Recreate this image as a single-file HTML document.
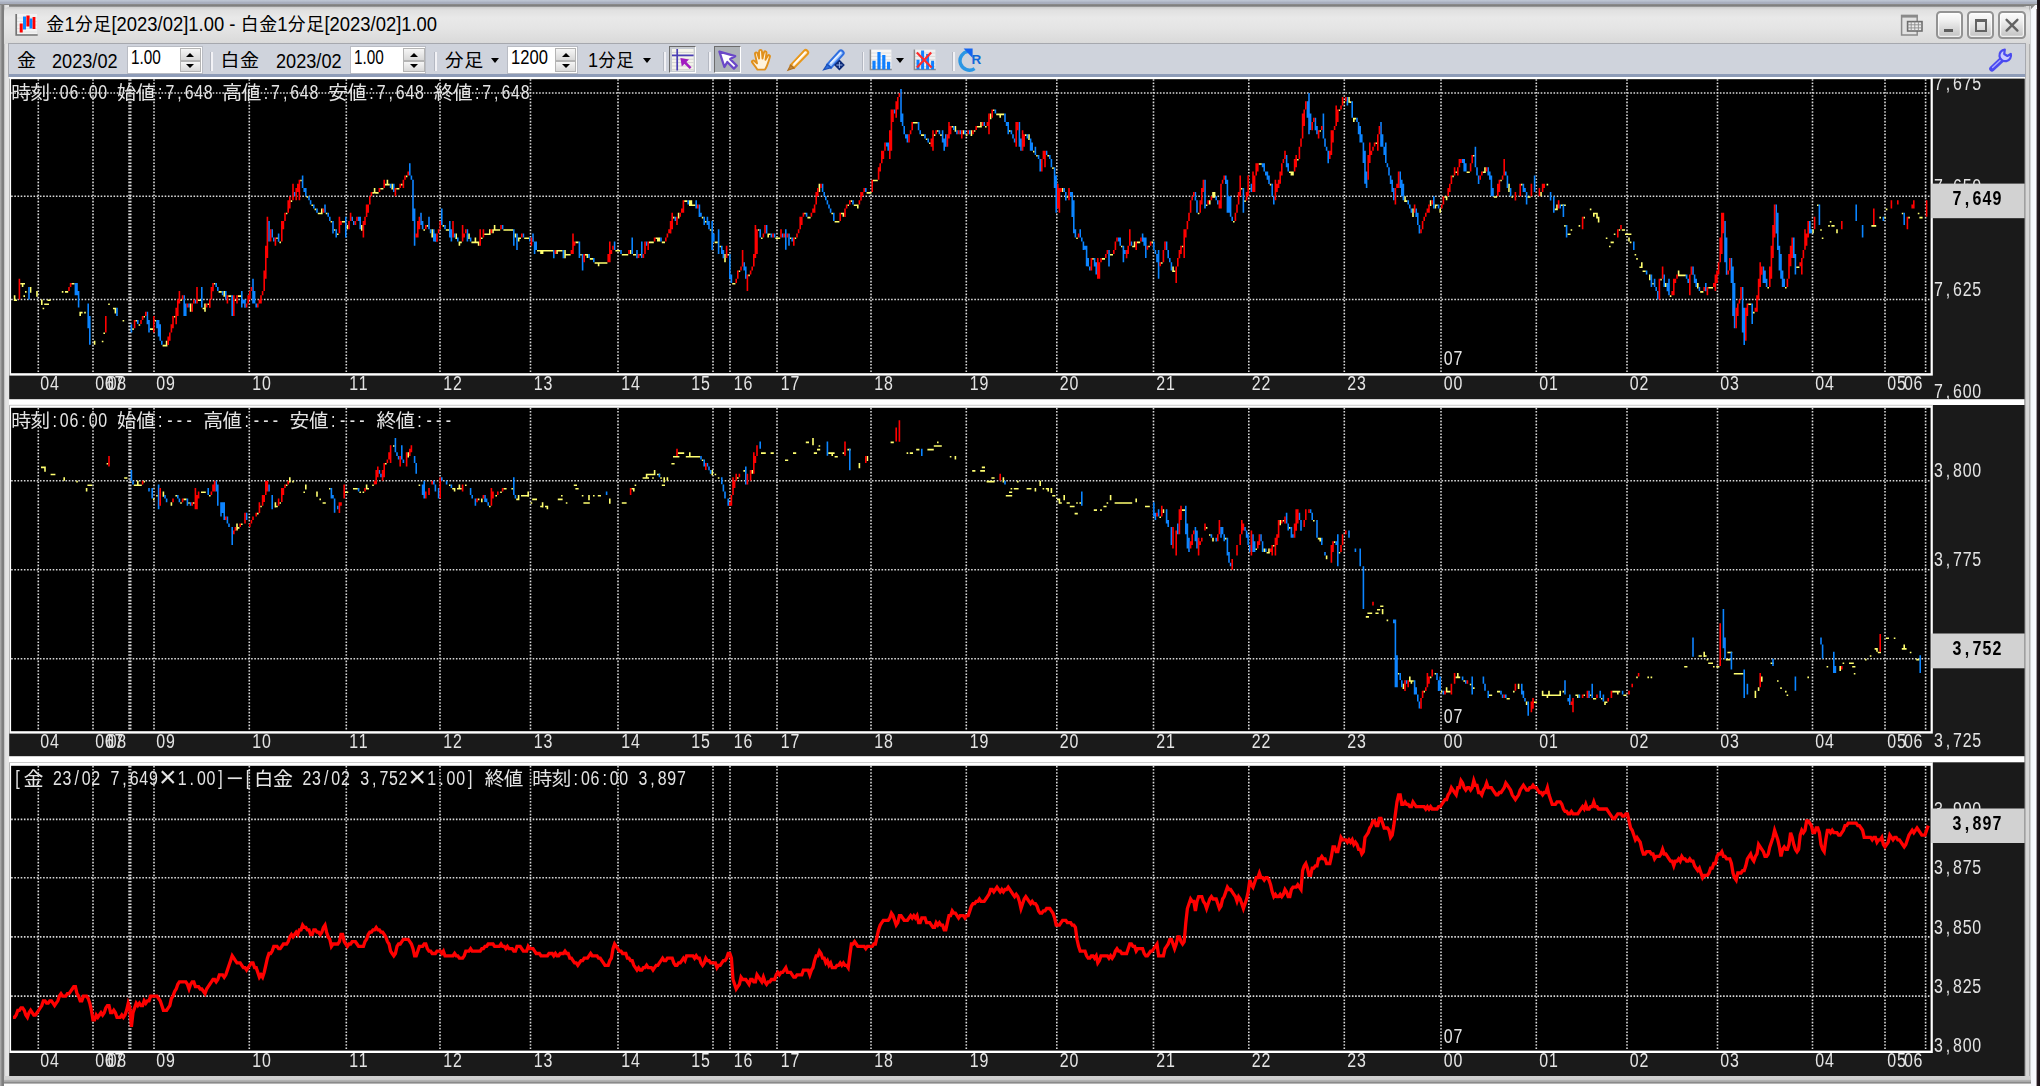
<!DOCTYPE html>
<html lang="ja"><head><meta charset="utf-8"><title>金1分足[2023/02]1.00 - 白金1分足[2023/02]1.00</title>
<style>
html,body{margin:0;padding:0}
body{width:2040px;height:1086px;overflow:hidden;position:relative;background:#fff;font-family:"Liberation Sans","IPAGothic","Noto Sans CJK JP",sans-serif}
div,span{position:absolute;box-sizing:border-box}
.ui{font-family:"Liberation Sans","IPAGothic","Noto Sans CJK JP",sans-serif;color:#000;white-space:nowrap;font-size:19.5px;line-height:24px;transform-origin:0 0}
#bgtop{left:0;top:0;width:2040px;height:8px;background:linear-gradient(#bdc5d3 0,#bbc3d1 1.2px,#aab0c0 1.9px,#a8aebd 3.6px,#8a8a8a 4.5px,#787878 6.2px,#bdbdbd 6.9px,#d4d4d4 8px)}
#frameL{left:0;top:4.5px;width:9.4px;height:1082px;background:linear-gradient(90deg,#ababab 0,#a0a0a0 1.2px,#7e7e7e 1.8px,#7e7e7e 3.8px,#c4c4c4 4.4px,#e2e2e2 5.6px,#e6e6e6 9.4px)}
#frameR{left:2024.4px;top:6px;width:15.6px;height:1080px;background:linear-gradient(90deg,#a4a4a4 0,#b4b4b4 1.6px,#d6d6d6 2.4px,#d6d6d6 4.6px,#b0b0b0 5.2px,#b0b0b0 6.2px,#f4f4fa 6.8px,#fafaff 12.2px,#2a1c22 12.9px,#181016 15.6px)}
#cornerR{left:2036.7px;top:0;width:3.3px;height:8px;background:linear-gradient(90deg,#2a1c22 0,#181016 .8px)}
#cornerW{left:2031px;top:5px;width:5.9px;height:4px;background:linear-gradient(135deg,#8a8a8a 0,#8a8a8a 35%,#f6f6fa 50%)}
#frameB{left:4px;top:1076px;width:2027px;height:10px;background:linear-gradient(#d0d0d0 0,#cfcfcf 3.4px,#b4b4b4 4.2px,#a8a8a8 5.6px,#8a8a8a 6.4px,#8a8a8a 7.2px,#fdfdfd 8px)}
#title{left:4.4px;top:7px;width:2026px;height:36.6px;border-radius:5px 5px 0 0;background:linear-gradient(#cecece 0,#e0e0e0 3px,#e9e9e9 11px,#e4e4e4 22px,#d9d9d9 36.6px)}
#tbar{left:7.8px;top:43px;width:2018.4px;height:34px;background:#cfd3dc;border:1.4px solid #a6a8ae;border-bottom:none}
#tbarline{left:9.2px;top:74.4px;width:2015.4px;height:2.4px;background:#8e9cb8}
#tbarwhite{left:9.2px;top:76.8px;width:2015.4px;height:2px;background:#fdfdfd}
.spin{background:#fff;border:1px solid #b9bcc4;top:46.4px;height:27.4px}
.spbtn{width:21.4px;border:1px solid #b4b4b4;background:linear-gradient(#f6f6f6,#d8d8d8)}
.spbtn.u{top:0.6px;height:12.6px}
.spbtn.d{top:13.8px;height:10.6px}
.spbtn i{position:absolute;left:5.6px;width:0;height:0;border-left:4.2px solid transparent;border-right:4.2px solid transparent}
.spbtn.u i{top:3.8px;border-bottom:4.6px solid #000}
.spbtn.d i{top:1.6px;border-top:4.6px solid #000}
.sep{top:52.4px;width:2.2px;height:19px;background:linear-gradient(90deg,#b4b8c2 0,#b4b8c2 .6px,#f2f2f6 .8px)}
.dd{width:0;height:0;border-left:4.4px solid transparent;border-right:4.4px solid transparent;border-top:5.2px solid #000;top:57.6px}
.wbtn{top:11.2px;height:27.8px;border:2px solid #939393;border-radius:4.5px;background:linear-gradient(#fbfbfb 0,#f0f0f0 30%,#d2d2d2 75%,#c2c2c2 100%);box-shadow:inset 0 0 0 1.2px rgba(255,255,255,.75)}
.pressed{top:45.8px;height:27.6px;border-top:1.8px solid #6c6c6c;border-left:1.8px solid #6c6c6c;border-right:1.8px solid #fff;border-bottom:1.8px solid #fff}
</style></head>
<body>
<div id="bgtop"></div>
<div id="frameL"></div>
<div id="frameR"></div>
<div id="cornerR"></div><div id="cornerW"></div>
<div id="frameB"></div>
<div id="title"></div>
<!-- title icon -->
<svg style="position:absolute;left:15px;top:13px" width="24" height="24" viewBox="0 0 24 24">
<rect x="1" y="1" width="21" height="20" fill="#f3f3f3"/>
<path d="M2 5h20M2 8.5h20M2 12h20M2 15.5h20M2 19h20" stroke="#dedede" stroke-width="0.8"/>
<path d="M1.2 1v21h21.5" stroke="#747474" stroke-width="1.7" fill="none"/>
<path d="M6.2 10.5v9" stroke="#ff0000" stroke-width="3"/>
<path d="M9.5 3.5v13" stroke="#0a84ff" stroke-width="3"/>
<path d="M13 2.5v11" stroke="#ff0000" stroke-width="3.2"/>
<path d="M16 5.5v10" stroke="#0a84ff" stroke-width="3"/>
<path d="M19 4v12" stroke="#ff0000" stroke-width="2.8"/>
</svg>
<span class="ui" id="ttext" style="left:46.4px;top:11.8px;font-size:19.6px;transform:scaleX(.94)">金1分足[2023/02]1.00 - 白金1分足[2023/02]1.00</span>
<!-- window buttons -->
<svg style="position:absolute;left:1899px;top:13px" width="26" height="25" viewBox="0 0 26 25">
<rect x="2.6" y="2.4" width="15.6" height="19.6" fill="#e2e2e2" stroke="#8a8a8a" stroke-width="1.5"/>
<rect x="2.6" y="2.2" width="15.6" height="2.4" fill="#8a8a8a"/>
<rect x="8.6" y="8.6" width="14.4" height="9.4" fill="#ececec" stroke="#6e6e6e" stroke-width="1.6"/>
<path d="M8.6 11.8h14.4M8.6 14.9h14.4M12.2 8.6v9.4M15.8 8.6v9.4M19.4 8.6v9.4" stroke="#8c8c8c" stroke-width="0.9"/>
</svg>
<div class="wbtn" style="left:1935.8px;width:27.6px"><div style="left:6.2px;top:15.4px;width:9.4px;height:3px;background:#5e5e5e"></div></div>
<div class="wbtn" style="left:1967px;width:27px"><div style="left:5.6px;top:5.8px;width:12.6px;height:12.6px;border:2px solid #626262;border-top-width:3.6px"></div></div>
<div class="wbtn" style="left:1998px;width:28px"><svg style="position:absolute;left:0;top:0" width="25" height="25" viewBox="0 0 25 25"><path d="M6.600 6.800l10.800 10.800M17.400 6.800l-10.800 10.800" stroke="#626262" stroke-width="2.400" stroke-linecap="round"/></svg></div>
<!-- toolbar -->
<div id="tbar"></div><div id="tbarline"></div><div id="tbarwhite"></div>
<span class="ui" id="l1" style="left:16.8px;top:48.4px">金</span>
<span class="ui" id="l2" style="left:52.4px;top:49.2px;transform:scaleX(.93)">2023/02</span>
<div class="spin" style="left:127.0px;width:76.0px"><span class="ui" style="left:2.6px;top:-2.6px;transform:scaleX(0.786)">1.00</span><div class="spbtn u" style="left:51.6px"><i></i></div><div class="spbtn d" style="left:51.6px"><i></i></div></div>
<div class="sep" style="left:210.4px"></div>
<span class="ui" id="l3" style="left:220.2px;top:48.4px">白金</span>
<span class="ui" id="l4" style="left:275.8px;top:49.2px;transform:scaleX(.93)">2023/02</span>
<div class="spin" style="left:350.4px;width:76.0px"><span class="ui" style="left:2.8px;top:-2.6px;transform:scaleX(0.786)">1.00</span><div class="spbtn u" style="left:51.8px"><i></i></div><div class="spbtn d" style="left:51.8px"><i></i></div></div>
<div class="sep" style="left:434.4px"></div>
<span class="ui" id="l5" style="left:444.4px;top:48.4px">分足</span>
<div class="dd" style="left:491.4px"></div>
<div class="spin" style="left:507.0px;width:71.0px"><span class="ui" style="left:2.6px;top:-2.6px;transform:scaleX(0.850)">1200</span><div class="spbtn u" style="left:47.0px"><i></i></div><div class="spbtn d" style="left:47.0px"><i></i></div></div>
<span class="ui" id="l6" style="left:588px;top:48.4px;transform:scaleX(.925)">1分足</span>
<div class="dd" style="left:643px"></div>
<div class="sep" style="left:663.4px"></div>
<div class="pressed" style="left:668.6px;width:27.8px;background:#c6cad0"></div>
<svg style="position:absolute;left:671px;top:48px" width="24" height="24" viewBox="0 0 24 24">
<rect x="1" y="1" width="21.6" height="21.6" fill="#f4f4ec"/>
<path d="M1 4.4h21.6M1 7.8h21.6M1 11.2h21.6M1 14.6h21.6M1 18h21.6M1 21.4h21.6" stroke="#d4d4d0" stroke-width="1"/>
<path d="M6.2 1v21.6M1 7.4h21.6" stroke="#4a3fb4" stroke-width="1.7"/>
<path d="M19.6 20.2L11.4 12" stroke="#a21cc0" stroke-width="2.6"/>
<path d="M9.4 10l8.6 1.4-7.2 7.2z" fill="#a21cc0"/>
</svg>
<div class="sep" style="left:708.4px"></div>
<div class="pressed" style="left:713.8px;width:27.6px;background:#aeb3b8"></div>
<svg style="position:absolute;left:716px;top:48px" width="24" height="24" viewBox="0 0 24 24">
<path d="M3.4 3.6l5 15.4 2.9-5 6.6 6.6 2.9-2.9-6.6-6.6 5-2.9z" fill="#fff" stroke="#6a48c8" stroke-width="2.3" stroke-linejoin="round"/>
</svg>
<!-- hand -->
<svg style="position:absolute;left:750px;top:47px" width="25" height="25" viewBox="0 0 25 25">
<path d="M7.4 22.6c-1.4-2.6-3.6-5-5.2-7.2-.9-1.5.8-2.6 2.2-1.4l2.6 2.4c-.6-3.4-1.6-6.8-2-9.600-.2-1.600 2-2 2.500-.4l1.600 5.200c0-2.600-.2-5.400.1-7.600.3-1.600 2.400-1.500 2.700.1l.6 7.400c.5-2.200.9-4.600 1.600-6.400.6-1.400 2.500-.9 2.400.7l-1 7c.8-1.400 1.500-3 2.400-4.200.9-1.100 2.400-.3 2 1.100-.9 3.400-1.900 6.400-3 9.200-.6 1.500-1.200 2.600-1.900 3.700z" fill="#fff3dc" stroke="#e0901c" stroke-width="1.9" stroke-linejoin="round"/>
</svg>
<!-- pencil -->
<svg style="position:absolute;left:786px;top:47px" width="25" height="25" viewBox="0 0 25 25">
<path d="M4.600 18.200L18.400 3.400c1.600-1.600 5 1.600 3.400 3.400L8 21z" fill="#ffe6c0" stroke="#e8981c" stroke-width="2"/>
<path d="M4.600 18.200L2 23.200l6-2.200z" fill="#c88a3a" stroke="#b07020" stroke-width="1.2"/>
<path d="M7.600 17.600L19.400 5.200" stroke="#fff" stroke-width="1.400"/>
</svg>
<!-- marker -->
<svg style="position:absolute;left:822px;top:47px" width="26" height="25" viewBox="0 0 26 25">
<path d="M5.200 17.400L17.600 3.800c1.800-1.800 5.400 1.600 3.600 3.600L9 20.800z" fill="#9cc4ff" stroke="#2f6fe0" stroke-width="2"/>
<path d="M5.200 17.400L1.600 22.800l7.400-2z" fill="#2f6fe0" stroke="#1c50b8" stroke-width="1.200"/>
<path d="M8.400 16.600L19 5.400" stroke="#e6f0ff" stroke-width="1.600"/>
<path d="M17.400 12.600l5.400 5.400-5.400 5.400-5.400-5.400z" fill="#0c2a78"/>
<path d="M17.400 15v6M14.400 18h6" stroke="#9cb4e8" stroke-width="1"/>
</svg>
<div class="sep" style="left:861.6px"></div>
<!-- bar chart -->
<svg style="position:absolute;left:869px;top:48px" width="24" height="24" viewBox="0 0 24 24">
<rect x="1.400" y="1.600" width="21" height="20" fill="#f6f6f6"/>
<path d="M1.400 5h21M1.400 8.400h21M1.400 11.800h21M1.400 15.200h21M1.400 18.600h21" stroke="#dcdcdc" stroke-width=".9"/>
<path d="M1.400 1.600v20h21.400" stroke="#8a8a8a" stroke-width="1.500" fill="none"/>
<path d="M5 21.400v-8.600M10 21.400V4M14.800 21.400V7M19.600 21.400v-7.600" stroke="#0f80ff" stroke-width="3.200"/>
</svg>
<div class="dd" style="left:896px"></div>
<svg style="position:absolute;left:913px;top:48px" width="24" height="24" viewBox="0 0 24 24">
<rect x="1.400" y="1.600" width="21" height="20" fill="#f0f0f0"/>
<path d="M1.400 5h21M1.400 8.400h21M1.400 11.800h21M1.400 15.200h21M1.400 18.600h21" stroke="#d6d6d6" stroke-width=".9"/>
<path d="M1.400 1.600v20h21.400" stroke="#8a8a8a" stroke-width="1.500" fill="none"/>
<path d="M5 21.400v-9.600M9.600 21.400V2.400M14.600 21.400V6M19.600 21.400v-8.600" stroke="#0f80ff" stroke-width="3"/>
<path d="M3.800 4.400l14.800 15M18.200 4.400L4 19.400" stroke="#ff2a2a" stroke-width="2.200"/>
</svg>
<div class="sep" style="left:952.4px"></div>
<!-- refresh -->
<svg style="position:absolute;left:958px;top:46px" width="26" height="27" viewBox="0 0 26 27">
<path d="M16.600 22.600A9.400 9.400 0 1 1 10.400 5.400" fill="none" stroke="#2a96e4" stroke-width="3.400"/>
<path d="M5.600 2.400h9v9.600z" fill="#1464f0"/>
<text x="13.600" y="18.400" font-family="Liberation Sans,sans-serif" font-weight="bold" font-size="13.500" fill="#1268d8">R</text>
</svg>
<!-- wrench -->
<svg style="position:absolute;left:1988px;top:47px" width="27" height="26" viewBox="0 0 27 26">
<path d="M4 21.800L14 12.400" stroke="#4a4af0" stroke-width="5.600" stroke-linecap="round"/>
<path d="M4.600 20.600L12.400 13.200" stroke="#a8a8ff" stroke-width="1.400" stroke-linecap="round"/>
<path d="M22.800 6.800a5.800 5.800 0 1 1-6-4.200l-.6 4.400 3.200 2z" fill="#c8c8ff" stroke="#4a4af0" stroke-width="2.200" stroke-linejoin="round"/>
</svg>
<svg width="2040" height="1086" viewBox="0 0 2040 1086" style="position:absolute;left:0;top:0">
<defs><filter id="bl" filterUnits="userSpaceOnUse" x="0" y="0" width="2040" height="1086"><feGaussianBlur stdDeviation="0.45"/></filter><filter id="tb" filterUnits="userSpaceOnUse" x="0" y="0" width="2040" height="1086"><feGaussianBlur stdDeviation="0.4"/></filter></defs>
<style>.m{font-family:"Liberation Sans",sans-serif}.j{font-family:"Liberation Sans","IPAGothic","Noto Sans CJK JP",sans-serif}</style>
<g>
<rect x="9.2" y="78.6" width="2015.4" height="320.6" fill="#1a1a1a"/>
<rect x="9.4" y="77.0" width="1923.4" height="298.6" fill="#fff"/>
<rect x="11.1" y="79.2" width="1919.5" height="294.0" fill="#000"/>
<path d="M38.3 79.2 V373.2 M93.0 79.2 V373.2 M129.1 79.2 V373.2 M130.7 79.2 V373.2 M154.0 79.2 V373.2 M249.3 79.2 V373.2 M346.3 79.2 V373.2 M440.0 79.2 V373.2 M530.5 79.2 V373.2 M618.0 79.2 V373.2 M713.0 79.2 V373.2 M730.0 79.2 V373.2 M777.0 79.2 V373.2 M871.0 79.2 V373.2 M966.3 79.2 V373.2 M1056.8 79.2 V373.2 M1153.5 79.2 V373.2 M1248.8 79.2 V373.2 M1344.3 79.2 V373.2 M1441.0 79.2 V373.2 M1536.3 79.2 V373.2 M1627.0 79.2 V373.2 M1717.5 79.2 V373.2 M1812.5 79.2 V373.2 M1885.0 79.2 V373.2 M1925.6 79.2 V373.2" stroke="#d8d8d8" stroke-width="1.6" stroke-dasharray="1.6 1.6" fill="none"/>
<path d="M11.1 93.0 H1930.6 M11.1 196.2 H1930.6 M11.1 299.5 H1930.6" stroke="#d8d8d8" stroke-width="1.6" stroke-dasharray="1.6 1.6" fill="none"/>
<g filter="url(#tb)">
<text class="m" xml:space="preserve" transform="translate(40.0 389.8) scale(0.760 1)" x="0.5 13.1" fill="#e4e4e4" font-size="21">04</text>
<text class="m" xml:space="preserve" transform="translate(95.0 389.8) scale(0.760 1)" x="0.5 13.1" fill="#e4e4e4" font-size="21">06</text>
<text class="m" xml:space="preserve" transform="translate(104.6 389.8) scale(0.760 1)" x="0.5 13.1" fill="#e4e4e4" font-size="21">07</text>
<text class="m" xml:space="preserve" transform="translate(107.4 389.8) scale(0.760 1)" x="0.5 13.1" fill="#e4e4e4" font-size="21">08</text>
<text class="m" xml:space="preserve" transform="translate(156.0 389.8) scale(0.760 1)" x="0.5 13.1" fill="#e4e4e4" font-size="21">09</text>
<text class="m" xml:space="preserve" transform="translate(252.0 389.8) scale(0.760 1)" x="0.5 13.1" fill="#e4e4e4" font-size="21">10</text>
<text class="m" xml:space="preserve" transform="translate(348.8 389.8) scale(0.760 1)" x="0.5 13.1" fill="#e4e4e4" font-size="21">11</text>
<text class="m" xml:space="preserve" transform="translate(443.0 389.8) scale(0.760 1)" x="0.5 13.1" fill="#e4e4e4" font-size="21">12</text>
<text class="m" xml:space="preserve" transform="translate(533.5 389.8) scale(0.760 1)" x="0.5 13.1" fill="#e4e4e4" font-size="21">13</text>
<text class="m" xml:space="preserve" transform="translate(621.0 389.8) scale(0.760 1)" x="0.5 13.1" fill="#e4e4e4" font-size="21">14</text>
<text class="m" xml:space="preserve" transform="translate(691.0 389.8) scale(0.760 1)" x="0.5 13.1" fill="#e4e4e4" font-size="21">15</text>
<text class="m" xml:space="preserve" transform="translate(733.5 389.8) scale(0.760 1)" x="0.5 13.1" fill="#e4e4e4" font-size="21">16</text>
<text class="m" xml:space="preserve" transform="translate(780.5 389.8) scale(0.760 1)" x="0.5 13.1" fill="#e4e4e4" font-size="21">17</text>
<text class="m" xml:space="preserve" transform="translate(874.0 389.8) scale(0.760 1)" x="0.5 13.1" fill="#e4e4e4" font-size="21">18</text>
<text class="m" xml:space="preserve" transform="translate(969.5 389.8) scale(0.760 1)" x="0.5 13.1" fill="#e4e4e4" font-size="21">19</text>
<text class="m" xml:space="preserve" transform="translate(1059.5 389.8) scale(0.760 1)" x="0.5 13.1" fill="#e4e4e4" font-size="21">20</text>
<text class="m" xml:space="preserve" transform="translate(1156.0 389.8) scale(0.760 1)" x="0.5 13.1" fill="#e4e4e4" font-size="21">21</text>
<text class="m" xml:space="preserve" transform="translate(1251.5 389.8) scale(0.760 1)" x="0.5 13.1" fill="#e4e4e4" font-size="21">22</text>
<text class="m" xml:space="preserve" transform="translate(1347.0 389.8) scale(0.760 1)" x="0.5 13.1" fill="#e4e4e4" font-size="21">23</text>
<text class="m" xml:space="preserve" transform="translate(1443.5 389.8) scale(0.760 1)" x="0.5 13.1" fill="#e4e4e4" font-size="21">00</text>
<text class="m" xml:space="preserve" transform="translate(1539.0 389.8) scale(0.760 1)" x="0.5 13.1" fill="#e4e4e4" font-size="21">01</text>
<text class="m" xml:space="preserve" transform="translate(1629.5 389.8) scale(0.760 1)" x="0.5 13.1" fill="#e4e4e4" font-size="21">02</text>
<text class="m" xml:space="preserve" transform="translate(1720.0 389.8) scale(0.760 1)" x="0.5 13.1" fill="#e4e4e4" font-size="21">03</text>
<text class="m" xml:space="preserve" transform="translate(1815.0 389.8) scale(0.760 1)" x="0.5 13.1" fill="#e4e4e4" font-size="21">04</text>
<text class="m" xml:space="preserve" transform="translate(1887.0 389.8) scale(0.760 1)" x="0.5 13.1" fill="#e4e4e4" font-size="21">05</text>
<text class="m" xml:space="preserve" transform="translate(1903.6 389.8) scale(0.760 1)" x="0.5 13.1" fill="#e4e4e4" font-size="21">06</text>
<text class="m" xml:space="preserve" transform="translate(1443.5 365.2) scale(0.760 1)" x="0.5 13.1" fill="#e4e4e4" font-size="21">07</text>
<clipPath id="c0"><rect x="1930" y="78.6" width="100" height="320.6"/></clipPath>
<g clip-path="url(#c0)">
<text class="m" xml:space="preserve" transform="translate(1933.6 89.6) scale(0.760 1)" x="0.5 16.0 25.7 38.4 51.0" fill="#e4e4e4" font-size="21">7,675</text>
<text class="m" xml:space="preserve" transform="translate(1933.6 192.8) scale(0.760 1)" x="0.5 16.0 25.7 38.4 51.0" fill="#e4e4e4" font-size="21">7,650</text>
<text class="m" xml:space="preserve" transform="translate(1933.6 296.0) scale(0.760 1)" x="0.5 16.0 25.7 38.4 51.0" fill="#e4e4e4" font-size="21">7,625</text>
<text class="m" xml:space="preserve" transform="translate(1933.6 397.6) scale(0.760 1)" x="0.5 16.0 25.7 38.4 51.0" fill="#e4e4e4" font-size="21">7,600</text>
</g>
<text class="j" x="10.9 30.1" y="99.5" fill="#e4e4e4" font-size="20.4">時刻</text><text class="m" xml:space="preserve" transform="translate(49.9 98.5) scale(0.760 1)" x="3.4 13.1 25.7 41.3 51.0 63.6 79.2" fill="#e4e4e4" font-size="21">:06:00 </text><text class="j" x="116.5 135.7" y="99.5" fill="#e4e4e4" font-size="20.4">始値</text><text class="m" xml:space="preserve" transform="translate(155.5 98.5) scale(0.760 1)" x="3.4 13.1 28.7 38.4 51.0 63.6 79.2" fill="#e4e4e4" font-size="21">:7,648 </text><text class="j" x="222.1 241.3" y="99.5" fill="#e4e4e4" font-size="20.4">高値</text><text class="m" xml:space="preserve" transform="translate(261.1 98.5) scale(0.760 1)" x="3.4 13.1 28.7 38.4 51.0 63.6 79.2" fill="#e4e4e4" font-size="21">:7,648 </text><text class="j" x="327.7 346.9" y="99.5" fill="#e4e4e4" font-size="20.4">安値</text><text class="m" xml:space="preserve" transform="translate(366.7 98.5) scale(0.760 1)" x="3.4 13.1 28.7 38.4 51.0 63.6 79.2" fill="#e4e4e4" font-size="21">:7,648 </text><text class="j" x="433.3 452.5" y="99.5" fill="#e4e4e4" font-size="20.4">終値</text><text class="m" xml:space="preserve" transform="translate(472.3 98.5) scale(0.760 1)" x="3.4 13.1 28.7 38.4 51.0 63.6" fill="#e4e4e4" font-size="21">:7,648</text>
</g>
<g filter="url(#bl)">
<path d="M13.8 295.3 h1.6 v5.7 h-1.6 zM15.4 299.4 h1.6 v1.6 h-1.6 zM20.2 282.9 h4.8 v1.6 h-4.8 zM21.8 282.9 h1.6 v4.1 h-1.6 zM23.4 295.3 h1.6 v1.6 h-1.6 zM25.0 291.1 h1.6 v1.6 h-1.6 zM29.8 287.0 h1.6 v5.7 h-1.6 zM36.2 291.1 h1.6 v5.7 h-1.6 zM41.0 299.4 h1.6 v5.7 h-1.6 zM42.6 307.7 h1.6 v1.6 h-1.6 zM44.2 303.5 h4.8 v1.6 h-4.8 zM47.4 299.4 h3.2 v1.6 h-3.2 zM61.8 291.1 h1.6 v1.6 h-1.6 zM65.0 291.1 h1.6 v1.6 h-1.6 zM66.6 291.1 h1.6 v1.6 h-1.6 zM71.4 282.9 h1.6 v1.6 h-1.6 zM73.0 282.9 h1.6 v1.6 h-1.6 zM79.4 311.8 h1.6 v4.1 h-1.6 zM81.0 311.8 h1.6 v1.6 h-1.6 zM84.2 311.8 h1.6 v1.6 h-1.6 zM93.8 340.7 h1.6 v4.1 h-1.6 zM101.8 340.7 h1.6 v1.6 h-1.6 zM103.4 332.4 h1.6 v1.6 h-1.6 zM108.2 303.5 h1.6 v1.6 h-1.6 zM113.0 307.7 h1.6 v1.6 h-1.6 zM114.6 307.7 h1.6 v5.7 h-1.6 zM122.6 320.0 h1.6 v1.6 h-1.6 zM132.2 328.3 h1.6 v1.6 h-1.6 zM135.4 320.0 h1.6 v1.6 h-1.6 zM138.6 324.2 h1.6 v1.6 h-1.6 zM143.4 315.9 h1.6 v1.6 h-1.6 zM149.8 328.3 h1.6 v1.6 h-1.6 zM151.4 328.3 h1.6 v1.6 h-1.6 zM154.6 320.0 h1.6 v1.6 h-1.6 zM162.6 344.8 h1.6 v1.6 h-1.6 zM164.2 344.8 h1.6 v1.6 h-1.6 zM165.8 340.7 h1.6 v5.7 h-1.6 zM173.8 315.9 h1.6 v1.6 h-1.6 zM180.2 299.4 h1.6 v1.6 h-1.6 zM189.8 303.5 h1.6 v8.3 h-1.6 zM197.8 299.4 h1.6 v1.6 h-1.6 zM199.4 299.4 h1.6 v1.6 h-1.6 zM202.6 307.7 h1.6 v1.6 h-1.6 zM204.2 303.5 h1.6 v8.3 h-1.6 zM207.4 303.5 h1.6 v1.6 h-1.6 zM213.8 282.9 h1.6 v1.6 h-1.6 zM218.6 291.1 h1.6 v1.6 h-1.6 zM220.2 291.1 h1.6 v1.6 h-1.6 zM223.4 291.1 h1.6 v5.7 h-1.6 zM228.2 295.3 h1.6 v1.6 h-1.6 zM229.8 295.3 h1.6 v1.6 h-1.6 zM234.6 299.4 h1.6 v1.6 h-1.6 zM237.8 295.3 h1.6 v1.6 h-1.6 zM239.4 295.3 h1.6 v1.6 h-1.6 zM276.2 237.5 h1.6 v1.6 h-1.6 zM279.4 241.6 h1.6 v1.6 h-1.6 zM285.8 212.7 h1.6 v1.6 h-1.6 zM290.6 200.3 h1.6 v1.6 h-1.6 zM300.2 179.7 h1.6 v1.6 h-1.6 zM306.6 196.2 h1.6 v1.6 h-1.6 zM311.4 204.5 h1.6 v1.6 h-1.6 zM314.6 208.6 h1.6 v1.6 h-1.6 zM317.8 212.7 h1.6 v1.6 h-1.6 zM319.4 212.7 h1.6 v1.6 h-1.6 zM321.0 208.6 h1.6 v5.7 h-1.6 zM325.8 212.7 h1.6 v1.6 h-1.6 zM330.6 221.0 h1.6 v1.6 h-1.6 zM333.8 229.2 h1.6 v1.6 h-1.6 zM337.0 233.4 h1.6 v1.6 h-1.6 zM341.8 221.0 h1.6 v1.6 h-1.6 zM343.4 221.0 h1.6 v1.6 h-1.6 zM346.6 225.1 h1.6 v4.1 h-1.6 zM361.0 225.1 h1.6 v5.7 h-1.6 zM372.2 192.1 h1.6 v1.6 h-1.6 zM373.8 187.9 h1.6 v5.7 h-1.6 zM375.4 192.1 h1.6 v1.6 h-1.6 zM377.0 192.1 h1.6 v1.6 h-1.6 zM380.2 187.9 h1.6 v1.6 h-1.6 zM381.8 187.9 h1.6 v1.6 h-1.6 zM385.0 183.8 h1.6 v1.6 h-1.6 zM386.6 179.7 h1.6 v5.7 h-1.6 zM388.2 183.8 h1.6 v1.6 h-1.6 zM391.4 183.8 h1.6 v5.7 h-1.6 zM396.2 187.9 h1.6 v1.6 h-1.6 zM397.8 187.9 h1.6 v1.6 h-1.6 zM401.0 183.8 h1.6 v1.6 h-1.6 zM405.8 175.6 h1.6 v1.6 h-1.6 zM423.4 229.2 h1.6 v1.6 h-1.6 zM426.6 225.1 h1.6 v1.6 h-1.6 zM431.4 229.2 h1.6 v8.3 h-1.6 zM442.6 225.1 h1.6 v1.6 h-1.6 zM445.8 229.2 h1.6 v1.6 h-1.6 zM447.4 229.2 h1.6 v1.6 h-1.6 zM455.4 233.4 h1.6 v5.7 h-1.6 zM458.6 241.6 h1.6 v4.1 h-1.6 zM460.2 241.6 h1.6 v1.6 h-1.6 zM468.2 233.4 h1.6 v5.7 h-1.6 zM471.4 241.6 h1.6 v1.6 h-1.6 zM473.0 241.6 h1.6 v1.6 h-1.6 zM474.6 237.5 h1.6 v5.7 h-1.6 zM476.2 241.6 h1.6 v1.6 h-1.6 zM477.8 241.6 h1.6 v4.1 h-1.6 zM481.0 237.5 h1.6 v1.6 h-1.6 zM484.2 233.4 h1.6 v1.6 h-1.6 zM485.8 233.4 h1.6 v1.6 h-1.6 zM487.4 233.4 h1.6 v1.6 h-1.6 zM489.0 229.2 h1.6 v5.7 h-1.6 zM492.2 229.2 h1.6 v4.1 h-1.6 zM493.8 225.1 h1.6 v5.7 h-1.6 zM495.4 229.2 h1.6 v1.6 h-1.6 zM497.0 229.2 h1.6 v1.6 h-1.6 zM498.6 229.2 h1.6 v1.6 h-1.6 zM503.4 229.2 h1.6 v1.6 h-1.6 zM505.0 229.2 h1.6 v1.6 h-1.6 zM506.6 229.2 h1.6 v1.6 h-1.6 zM508.2 229.2 h1.6 v1.6 h-1.6 zM509.8 229.2 h1.6 v1.6 h-1.6 zM511.4 229.2 h1.6 v1.6 h-1.6 zM514.6 233.4 h1.6 v4.1 h-1.6 zM517.8 237.5 h1.6 v4.1 h-1.6 zM519.4 237.5 h1.6 v1.6 h-1.6 zM524.2 237.5 h1.6 v1.6 h-1.6 zM525.8 237.5 h1.6 v1.6 h-1.6 zM527.4 237.5 h1.6 v1.6 h-1.6 zM537.0 249.9 h1.6 v1.6 h-1.6 zM538.6 249.9 h1.6 v1.6 h-1.6 zM540.2 249.9 h1.6 v4.1 h-1.6 zM541.8 249.9 h1.6 v4.1 h-1.6 zM543.4 249.9 h1.6 v1.6 h-1.6 zM545.0 249.9 h1.6 v1.6 h-1.6 zM546.6 249.9 h1.6 v1.6 h-1.6 zM548.2 249.9 h1.6 v1.6 h-1.6 zM549.8 249.9 h1.6 v1.6 h-1.6 zM551.4 249.9 h1.6 v1.6 h-1.6 zM556.2 249.9 h1.6 v4.1 h-1.6 zM557.8 249.9 h1.6 v1.6 h-1.6 zM559.4 249.9 h1.6 v1.6 h-1.6 zM561.0 249.9 h1.6 v1.6 h-1.6 zM564.2 249.9 h1.6 v8.3 h-1.6 zM565.8 254.0 h1.6 v1.6 h-1.6 zM567.4 254.0 h1.6 v1.6 h-1.6 zM569.0 254.0 h1.6 v1.6 h-1.6 zM575.4 241.6 h1.6 v1.6 h-1.6 zM577.0 241.6 h1.6 v1.6 h-1.6 zM580.2 254.0 h1.6 v1.6 h-1.6 zM585.0 254.0 h1.6 v1.6 h-1.6 zM586.6 254.0 h1.6 v4.1 h-1.6 zM589.8 258.1 h1.6 v1.6 h-1.6 zM591.4 258.1 h1.6 v1.6 h-1.6 zM594.6 262.2 h1.6 v1.6 h-1.6 zM596.2 262.2 h1.6 v1.6 h-1.6 zM597.8 262.2 h1.6 v4.1 h-1.6 zM599.4 262.2 h1.6 v1.6 h-1.6 zM601.0 262.2 h1.6 v1.6 h-1.6 zM602.6 262.2 h1.6 v1.6 h-1.6 zM604.2 262.2 h1.6 v1.6 h-1.6 zM605.8 262.2 h1.6 v1.6 h-1.6 zM615.4 249.9 h1.6 v1.6 h-1.6 zM617.0 249.9 h1.6 v1.6 h-1.6 zM618.6 249.9 h1.6 v1.6 h-1.6 zM621.8 254.0 h1.6 v1.6 h-1.6 zM623.4 254.0 h1.6 v1.6 h-1.6 zM625.0 254.0 h1.6 v1.6 h-1.6 zM626.6 254.0 h1.6 v1.6 h-1.6 zM629.8 249.9 h1.6 v4.1 h-1.6 zM633.0 254.0 h1.6 v1.6 h-1.6 zM634.6 254.0 h1.6 v1.6 h-1.6 zM639.4 254.0 h1.6 v1.6 h-1.6 zM649.0 241.6 h1.6 v1.6 h-1.6 zM650.6 241.6 h1.6 v1.6 h-1.6 zM652.2 241.6 h1.6 v1.6 h-1.6 zM655.4 237.5 h1.6 v1.6 h-1.6 zM657.0 237.5 h1.6 v4.1 h-1.6 zM658.6 237.5 h1.6 v4.1 h-1.6 zM661.8 241.6 h1.6 v1.6 h-1.6 zM663.4 241.6 h1.6 v1.6 h-1.6 zM673.0 216.8 h1.6 v1.6 h-1.6 zM677.8 212.7 h1.6 v5.7 h-1.6 zM684.2 200.3 h1.6 v1.6 h-1.6 zM685.8 200.3 h1.6 v1.6 h-1.6 zM689.0 200.3 h1.6 v5.7 h-1.6 zM690.6 200.3 h1.6 v5.7 h-1.6 zM692.2 204.5 h1.6 v1.6 h-1.6 zM693.8 204.5 h1.6 v1.6 h-1.6 zM701.8 216.8 h1.6 v1.6 h-1.6 zM705.0 221.0 h1.6 v1.6 h-1.6 zM709.8 229.2 h1.6 v1.6 h-1.6 zM714.6 241.6 h1.6 v1.6 h-1.6 zM716.2 241.6 h1.6 v1.6 h-1.6 zM719.4 245.7 h1.6 v1.6 h-1.6 zM724.2 254.0 h1.6 v8.3 h-1.6 zM727.4 254.0 h1.6 v1.6 h-1.6 zM732.2 282.9 h1.6 v1.6 h-1.6 zM733.8 282.9 h1.6 v1.6 h-1.6 zM738.6 270.5 h1.6 v1.6 h-1.6 zM748.2 274.6 h1.6 v1.6 h-1.6 zM757.8 229.2 h1.6 v1.6 h-1.6 zM761.0 237.5 h1.6 v1.6 h-1.6 zM767.4 233.4 h1.6 v4.1 h-1.6 zM769.0 233.4 h1.6 v1.6 h-1.6 zM775.4 237.5 h1.6 v1.6 h-1.6 zM777.0 237.5 h1.6 v1.6 h-1.6 zM778.6 237.5 h1.6 v1.6 h-1.6 zM789.8 237.5 h1.6 v1.6 h-1.6 zM794.6 237.5 h1.6 v1.6 h-1.6 zM804.2 212.7 h1.6 v1.6 h-1.6 zM807.4 216.8 h1.6 v1.6 h-1.6 zM809.0 216.8 h1.6 v1.6 h-1.6 zM818.6 183.8 h1.6 v8.3 h-1.6 zM831.4 212.7 h1.6 v1.6 h-1.6 zM834.6 221.0 h1.6 v1.6 h-1.6 zM836.2 221.0 h1.6 v1.6 h-1.6 zM837.8 221.0 h1.6 v1.6 h-1.6 zM841.0 212.7 h1.6 v1.6 h-1.6 zM842.6 212.7 h1.6 v4.1 h-1.6 zM847.4 204.5 h1.6 v1.6 h-1.6 zM850.6 200.3 h1.6 v1.6 h-1.6 zM853.8 204.5 h1.6 v1.6 h-1.6 zM855.4 204.5 h1.6 v1.6 h-1.6 zM857.0 204.5 h1.6 v4.1 h-1.6 zM866.6 192.1 h1.6 v1.6 h-1.6 zM868.2 192.1 h1.6 v1.6 h-1.6 zM869.8 192.1 h1.6 v1.6 h-1.6 zM873.0 179.7 h1.6 v1.6 h-1.6 zM874.6 179.7 h1.6 v1.6 h-1.6 zM876.2 179.7 h1.6 v1.6 h-1.6 zM913.0 121.9 h1.6 v1.6 h-1.6 zM914.6 121.9 h1.6 v1.6 h-1.6 zM916.2 121.9 h1.6 v1.6 h-1.6 zM921.0 134.3 h1.6 v1.6 h-1.6 zM922.6 134.3 h1.6 v1.6 h-1.6 zM925.8 138.4 h1.6 v1.6 h-1.6 zM929.0 142.5 h1.6 v1.6 h-1.6 zM933.8 134.3 h1.6 v1.6 h-1.6 zM937.0 130.2 h1.6 v1.6 h-1.6 zM940.2 134.3 h1.6 v1.6 h-1.6 zM951.4 126.0 h1.6 v1.6 h-1.6 zM954.6 126.0 h1.6 v5.7 h-1.6 zM962.6 130.2 h1.6 v4.1 h-1.6 zM965.8 134.3 h1.6 v1.6 h-1.6 zM970.6 130.2 h1.6 v5.7 h-1.6 zM973.8 130.2 h1.6 v1.6 h-1.6 zM977.0 126.0 h1.6 v1.6 h-1.6 zM978.6 126.0 h1.6 v1.6 h-1.6 zM980.2 121.9 h1.6 v5.7 h-1.6 zM985.0 126.0 h1.6 v1.6 h-1.6 zM989.8 113.6 h1.6 v5.7 h-1.6 zM993.0 109.5 h1.6 v1.6 h-1.6 zM996.2 113.6 h1.6 v1.6 h-1.6 zM997.8 113.6 h1.6 v1.6 h-1.6 zM999.4 113.6 h1.6 v4.1 h-1.6 zM1001.0 113.6 h1.6 v1.6 h-1.6 zM1002.6 113.6 h1.6 v1.6 h-1.6 zM1009.0 130.2 h1.6 v1.6 h-1.6 zM1025.0 134.3 h1.6 v1.6 h-1.6 zM1028.2 134.3 h1.6 v5.7 h-1.6 zM1033.0 150.8 h1.6 v1.6 h-1.6 zM1036.2 154.9 h1.6 v1.6 h-1.6 zM1047.4 154.9 h1.6 v1.6 h-1.6 zM1052.2 167.3 h1.6 v1.6 h-1.6 zM1061.8 187.9 h1.6 v4.1 h-1.6 zM1066.6 196.2 h1.6 v1.6 h-1.6 zM1076.2 237.5 h1.6 v1.6 h-1.6 zM1092.2 258.1 h1.6 v1.6 h-1.6 zM1101.8 258.1 h1.6 v1.6 h-1.6 zM1103.4 258.1 h1.6 v1.6 h-1.6 zM1109.8 254.0 h1.6 v1.6 h-1.6 zM1111.4 254.0 h1.6 v1.6 h-1.6 zM1121.0 245.7 h1.6 v1.6 h-1.6 zM1132.2 245.7 h1.6 v1.6 h-1.6 zM1133.8 241.6 h1.6 v5.7 h-1.6 zM1137.0 241.6 h1.6 v1.6 h-1.6 zM1138.6 241.6 h1.6 v1.6 h-1.6 zM1148.2 245.7 h1.6 v1.6 h-1.6 zM1151.4 241.6 h1.6 v1.6 h-1.6 zM1161.0 262.2 h1.6 v1.6 h-1.6 zM1172.2 266.4 h1.6 v5.7 h-1.6 zM1173.8 270.5 h1.6 v1.6 h-1.6 zM1181.8 245.7 h1.6 v1.6 h-1.6 zM1197.8 212.7 h1.6 v1.6 h-1.6 zM1205.8 204.5 h1.6 v1.6 h-1.6 zM1209.0 200.3 h1.6 v4.1 h-1.6 zM1212.2 192.1 h1.6 v5.7 h-1.6 zM1213.8 192.1 h1.6 v5.7 h-1.6 zM1233.0 221.0 h1.6 v1.6 h-1.6 zM1241.0 187.9 h1.6 v1.6 h-1.6 zM1244.2 200.3 h1.6 v1.6 h-1.6 zM1249.0 187.9 h1.6 v1.6 h-1.6 zM1258.6 163.2 h1.6 v1.6 h-1.6 zM1260.2 163.2 h1.6 v1.6 h-1.6 zM1269.8 183.8 h1.6 v1.6 h-1.6 zM1289.0 171.4 h1.6 v1.6 h-1.6 zM1290.6 171.4 h1.6 v4.1 h-1.6 zM1292.2 171.4 h1.6 v4.1 h-1.6 zM1297.0 159.0 h1.6 v1.6 h-1.6 zM1319.4 130.2 h1.6 v1.6 h-1.6 zM1338.6 109.5 h1.6 v1.6 h-1.6 zM1343.4 101.3 h1.6 v1.6 h-1.6 zM1348.2 97.1 h1.6 v5.7 h-1.6 zM1349.8 101.3 h1.6 v1.6 h-1.6 zM1353.0 117.8 h1.6 v4.1 h-1.6 zM1354.6 117.8 h1.6 v1.6 h-1.6 zM1375.4 142.5 h1.6 v1.6 h-1.6 zM1404.2 196.2 h1.6 v5.7 h-1.6 zM1405.8 200.3 h1.6 v1.6 h-1.6 zM1412.2 208.6 h1.6 v8.3 h-1.6 zM1429.8 200.3 h1.6 v5.7 h-1.6 zM1434.6 204.5 h1.6 v4.1 h-1.6 zM1436.2 204.5 h1.6 v1.6 h-1.6 zM1439.4 208.6 h1.6 v4.1 h-1.6 zM1444.2 196.2 h1.6 v1.6 h-1.6 zM1445.8 196.2 h1.6 v4.1 h-1.6 zM1452.2 175.6 h1.6 v1.6 h-1.6 zM1455.4 171.4 h1.6 v1.6 h-1.6 zM1466.6 171.4 h1.6 v1.6 h-1.6 zM1468.2 171.4 h1.6 v1.6 h-1.6 zM1473.0 154.9 h1.6 v1.6 h-1.6 zM1482.6 171.4 h1.6 v1.6 h-1.6 zM1484.2 167.3 h1.6 v5.7 h-1.6 zM1493.8 196.2 h1.6 v1.6 h-1.6 zM1495.4 196.2 h1.6 v1.6 h-1.6 zM1500.2 179.7 h1.6 v1.6 h-1.6 zM1508.2 183.8 h1.6 v8.3 h-1.6 zM1511.4 196.2 h1.6 v1.6 h-1.6 zM1521.0 183.8 h1.6 v1.6 h-1.6 zM1527.4 196.2 h1.6 v1.6 h-1.6 zM1529.0 196.2 h1.6 v1.6 h-1.6 zM1540.2 192.1 h1.6 v4.1 h-1.6 zM1546.6 183.8 h1.6 v1.6 h-1.6 zM1554.6 208.6 h1.6 v1.6 h-1.6 zM1556.2 204.5 h1.6 v5.7 h-1.6 zM1561.0 204.5 h4.8 v1.6 h-4.8 zM1564.2 225.1 h1.6 v1.6 h-1.6 zM1567.4 233.4 h3.2 v1.6 h-3.2 zM1569.0 233.4 h1.6 v1.6 h-1.6 zM1570.6 229.2 h1.6 v1.6 h-1.6 zM1578.6 225.1 h1.6 v1.6 h-1.6 zM1583.4 216.8 h1.6 v1.6 h-1.6 zM1589.8 208.6 h1.6 v1.6 h-1.6 zM1593.0 212.7 h1.6 v4.1 h-1.6 zM1594.6 212.7 h1.6 v1.6 h-1.6 zM1596.2 212.7 h1.6 v5.7 h-1.6 zM1597.8 216.8 h1.6 v5.7 h-1.6 zM1605.8 237.5 h1.6 v1.6 h-1.6 zM1609.0 245.7 h1.6 v1.6 h-1.6 zM1610.6 241.6 h3.2 v1.6 h-3.2 zM1613.8 233.4 h1.6 v1.6 h-1.6 zM1618.6 229.2 h1.6 v1.6 h-1.6 zM1621.8 229.2 h3.2 v1.6 h-3.2 zM1625.0 233.4 h1.6 v1.6 h-1.6 zM1626.6 233.4 h4.8 v1.6 h-4.8 zM1628.2 237.5 h1.6 v4.1 h-1.6 zM1629.8 241.6 h1.6 v1.6 h-1.6 zM1634.6 254.0 h1.6 v1.6 h-1.6 zM1636.2 258.1 h1.6 v1.6 h-1.6 zM1639.4 266.4 h1.6 v1.6 h-1.6 zM1641.0 262.2 h1.6 v5.7 h-1.6 zM1642.6 270.5 h3.2 v1.6 h-3.2 zM1649.0 274.6 h1.6 v5.7 h-1.6 zM1652.2 282.9 h1.6 v1.6 h-1.6 zM1660.2 278.8 h1.6 v1.6 h-1.6 zM1665.0 282.9 h1.6 v4.1 h-1.6 zM1669.8 295.3 h1.6 v1.6 h-1.6 zM1677.8 270.5 h1.6 v5.7 h-1.6 zM1679.4 274.6 h1.6 v1.6 h-1.6 zM1681.0 274.6 h1.6 v1.6 h-1.6 zM1682.6 274.6 h1.6 v1.6 h-1.6 zM1684.2 274.6 h1.6 v1.6 h-1.6 zM1697.0 282.9 h1.6 v5.7 h-1.6 zM1700.2 291.1 h1.6 v1.6 h-1.6 zM1701.8 291.1 h1.6 v1.6 h-1.6 zM1708.2 287.0 h1.6 v1.6 h-1.6 zM1709.8 287.0 h1.6 v1.6 h-1.6 zM1711.4 287.0 h1.6 v1.6 h-1.6 zM1748.2 303.5 h1.6 v1.6 h-1.6 zM1749.8 303.5 h1.6 v1.6 h-1.6 zM1753.0 311.8 h1.6 v1.6 h-1.6 zM1767.4 287.0 h1.6 v1.6 h-1.6 zM1785.0 287.0 h1.6 v1.6 h-1.6 zM1796.2 266.4 h1.6 v1.6 h-1.6 zM1797.8 266.4 h1.6 v1.6 h-1.6 zM1812.2 229.2 h1.6 v4.1 h-1.6 zM1817.0 204.5 h1.6 v1.6 h-1.6 zM1820.2 229.2 h1.6 v1.6 h-1.6 zM1821.8 237.5 h1.6 v1.6 h-1.6 zM1828.2 225.1 h1.6 v1.6 h-1.6 zM1829.8 221.0 h1.6 v1.6 h-1.6 zM1831.4 225.1 h1.6 v1.6 h-1.6 zM1833.0 225.1 h1.6 v1.6 h-1.6 zM1836.2 229.2 h1.6 v4.1 h-1.6 zM1871.4 225.1 h4.8 v1.6 h-4.8 zM1879.4 216.8 h1.6 v1.6 h-1.6 zM1884.2 216.8 h1.6 v1.6 h-1.6 zM1885.8 208.6 h1.6 v1.6 h-1.6 zM1901.8 212.7 h1.6 v1.6 h-1.6 zM1908.2 216.8 h1.6 v1.6 h-1.6 zM1917.8 212.7 h1.6 v1.6 h-1.6 zM1919.4 216.8 h3.2 v1.6 h-3.2 z" fill="#ffff70"/>
<path d="M28.2 287.0 h1.6 v12.4 h-1.6 zM74.6 282.9 h1.6 v12.4 h-1.6 zM76.2 282.9 h1.6 v12.4 h-1.6 zM77.8 291.1 h1.6 v16.5 h-1.6 zM87.4 303.5 h1.6 v24.8 h-1.6 zM89.0 315.9 h1.6 v28.9 h-1.6 zM116.2 307.7 h1.6 v8.3 h-1.6 zM130.6 324.2 h1.6 v8.3 h-1.6 zM137.0 320.0 h1.6 v4.1 h-1.6 zM146.6 311.8 h1.6 v12.4 h-1.6 zM148.2 320.0 h1.6 v12.4 h-1.6 zM156.2 320.0 h1.6 v8.3 h-1.6 zM157.8 320.0 h1.6 v16.5 h-1.6 zM159.4 324.2 h1.6 v16.5 h-1.6 zM161.0 340.7 h1.6 v4.1 h-1.6 zM183.4 295.3 h1.6 v20.6 h-1.6 zM185.0 303.5 h1.6 v12.4 h-1.6 zM188.2 303.5 h1.6 v4.1 h-1.6 zM194.6 299.4 h1.6 v4.1 h-1.6 zM201.0 287.0 h1.6 v20.6 h-1.6 zM215.4 282.9 h1.6 v4.1 h-1.6 zM217.0 287.0 h1.6 v4.1 h-1.6 zM221.8 291.1 h1.6 v4.1 h-1.6 zM225.0 291.1 h1.6 v8.3 h-1.6 zM231.4 295.3 h1.6 v20.6 h-1.6 zM241.0 291.1 h1.6 v16.5 h-1.6 zM242.6 299.4 h1.6 v4.1 h-1.6 zM244.2 299.4 h1.6 v8.3 h-1.6 zM252.2 278.8 h1.6 v24.8 h-1.6 zM253.8 291.1 h1.6 v12.4 h-1.6 zM255.4 303.5 h1.6 v4.1 h-1.6 zM268.2 221.0 h1.6 v20.6 h-1.6 zM271.4 229.2 h1.6 v8.3 h-1.6 zM273.0 237.5 h1.6 v4.1 h-1.6 zM277.8 233.4 h1.6 v8.3 h-1.6 zM293.8 192.1 h1.6 v4.1 h-1.6 zM301.8 175.6 h1.6 v12.4 h-1.6 zM303.4 187.9 h1.6 v4.1 h-1.6 zM305.0 187.9 h1.6 v8.3 h-1.6 zM308.2 196.2 h1.6 v4.1 h-1.6 zM309.8 200.3 h1.6 v4.1 h-1.6 zM313.0 204.5 h1.6 v4.1 h-1.6 zM316.2 208.6 h1.6 v4.1 h-1.6 zM324.2 204.5 h1.6 v8.3 h-1.6 zM327.4 212.7 h1.6 v4.1 h-1.6 zM329.0 216.8 h1.6 v4.1 h-1.6 zM332.2 221.0 h1.6 v12.4 h-1.6 zM335.4 229.2 h1.6 v8.3 h-1.6 zM345.0 216.8 h1.6 v20.6 h-1.6 zM351.4 216.8 h1.6 v4.1 h-1.6 zM353.0 221.0 h1.6 v4.1 h-1.6 zM357.8 216.8 h1.6 v4.1 h-1.6 zM359.4 216.8 h1.6 v12.4 h-1.6 zM389.8 183.8 h1.6 v4.1 h-1.6 zM393.0 183.8 h1.6 v8.3 h-1.6 zM409.0 163.2 h1.6 v12.4 h-1.6 zM410.6 175.6 h1.6 v4.1 h-1.6 zM412.2 179.7 h1.6 v41.3 h-1.6 zM413.8 208.6 h1.6 v37.2 h-1.6 zM420.2 212.7 h1.6 v12.4 h-1.6 zM421.8 221.0 h1.6 v8.3 h-1.6 zM428.2 216.8 h1.6 v12.4 h-1.6 zM429.8 229.2 h1.6 v4.1 h-1.6 zM433.0 229.2 h1.6 v12.4 h-1.6 zM434.6 233.4 h1.6 v8.3 h-1.6 zM441.0 208.6 h1.6 v16.5 h-1.6 zM444.2 225.1 h1.6 v4.1 h-1.6 zM449.0 221.0 h1.6 v16.5 h-1.6 zM450.6 229.2 h1.6 v12.4 h-1.6 zM453.8 233.4 h1.6 v4.1 h-1.6 zM457.0 237.5 h1.6 v4.1 h-1.6 zM466.6 229.2 h1.6 v12.4 h-1.6 zM469.8 237.5 h1.6 v4.1 h-1.6 zM501.8 225.1 h1.6 v4.1 h-1.6 zM513.0 229.2 h1.6 v16.5 h-1.6 zM516.2 233.4 h1.6 v16.5 h-1.6 zM522.6 233.4 h1.6 v4.1 h-1.6 zM529.0 237.5 h1.6 v4.1 h-1.6 zM532.2 233.4 h1.6 v8.3 h-1.6 zM533.8 241.6 h1.6 v12.4 h-1.6 zM535.4 241.6 h1.6 v8.3 h-1.6 zM553.0 249.9 h1.6 v8.3 h-1.6 zM562.6 249.9 h1.6 v8.3 h-1.6 zM578.6 241.6 h1.6 v16.5 h-1.6 zM581.8 254.0 h1.6 v16.5 h-1.6 zM588.2 254.0 h1.6 v4.1 h-1.6 zM593.0 258.1 h1.6 v4.1 h-1.6 zM613.8 241.6 h1.6 v8.3 h-1.6 zM620.2 249.9 h1.6 v4.1 h-1.6 zM631.4 237.5 h1.6 v16.5 h-1.6 zM636.2 249.9 h1.6 v8.3 h-1.6 zM641.0 241.6 h1.6 v16.5 h-1.6 zM645.8 241.6 h1.6 v4.1 h-1.6 zM660.2 237.5 h1.6 v4.1 h-1.6 zM674.6 216.8 h1.6 v4.1 h-1.6 zM687.4 200.3 h1.6 v4.1 h-1.6 zM695.4 200.3 h1.6 v8.3 h-1.6 zM698.6 204.5 h1.6 v12.4 h-1.6 zM700.2 212.7 h1.6 v4.1 h-1.6 zM703.4 216.8 h1.6 v8.3 h-1.6 zM706.6 216.8 h1.6 v8.3 h-1.6 zM708.2 221.0 h1.6 v8.3 h-1.6 zM711.4 221.0 h1.6 v28.9 h-1.6 zM713.0 233.4 h1.6 v8.3 h-1.6 zM717.8 229.2 h1.6 v24.8 h-1.6 zM721.0 245.7 h1.6 v8.3 h-1.6 zM722.6 249.9 h1.6 v8.3 h-1.6 zM729.0 254.0 h1.6 v24.8 h-1.6 zM730.6 274.6 h1.6 v8.3 h-1.6 zM743.4 262.2 h1.6 v8.3 h-1.6 zM745.0 266.4 h1.6 v12.4 h-1.6 zM759.4 229.2 h1.6 v8.3 h-1.6 zM765.8 225.1 h1.6 v8.3 h-1.6 zM770.6 233.4 h1.6 v4.1 h-1.6 zM773.8 233.4 h1.6 v4.1 h-1.6 zM781.8 233.4 h1.6 v4.1 h-1.6 zM785.0 229.2 h1.6 v20.6 h-1.6 zM788.2 233.4 h1.6 v12.4 h-1.6 zM791.4 237.5 h1.6 v4.1 h-1.6 zM805.8 212.7 h1.6 v4.1 h-1.6 zM821.8 183.8 h1.6 v8.3 h-1.6 zM823.4 192.1 h1.6 v4.1 h-1.6 zM825.0 196.2 h1.6 v4.1 h-1.6 zM826.6 200.3 h1.6 v4.1 h-1.6 zM828.2 204.5 h1.6 v4.1 h-1.6 zM829.8 208.6 h1.6 v4.1 h-1.6 zM833.0 212.7 h1.6 v8.3 h-1.6 zM852.2 200.3 h1.6 v4.1 h-1.6 zM865.0 187.9 h1.6 v4.1 h-1.6 zM885.8 142.5 h1.6 v4.1 h-1.6 zM887.4 142.5 h1.6 v8.3 h-1.6 zM893.8 109.5 h1.6 v4.1 h-1.6 zM900.2 88.9 h1.6 v33.0 h-1.6 zM901.8 113.6 h1.6 v12.4 h-1.6 zM903.4 126.0 h1.6 v8.3 h-1.6 zM905.0 134.3 h1.6 v4.1 h-1.6 zM906.6 134.3 h1.6 v8.3 h-1.6 zM917.8 121.9 h1.6 v8.3 h-1.6 zM919.4 130.2 h1.6 v4.1 h-1.6 zM924.2 134.3 h1.6 v4.1 h-1.6 zM927.4 138.4 h1.6 v4.1 h-1.6 zM938.6 130.2 h1.6 v4.1 h-1.6 zM941.8 130.2 h1.6 v12.4 h-1.6 zM943.4 138.4 h1.6 v12.4 h-1.6 zM945.0 134.3 h1.6 v12.4 h-1.6 zM953.0 126.0 h1.6 v4.1 h-1.6 zM956.2 130.2 h1.6 v4.1 h-1.6 zM959.4 130.2 h1.6 v4.1 h-1.6 zM964.2 130.2 h1.6 v4.1 h-1.6 zM969.0 130.2 h1.6 v4.1 h-1.6 zM983.4 121.9 h1.6 v4.1 h-1.6 zM994.6 109.5 h1.6 v4.1 h-1.6 zM1004.2 113.6 h1.6 v8.3 h-1.6 zM1005.8 121.9 h1.6 v4.1 h-1.6 zM1007.4 121.9 h1.6 v12.4 h-1.6 zM1010.6 130.2 h1.6 v4.1 h-1.6 zM1012.2 134.3 h1.6 v4.1 h-1.6 zM1013.8 138.4 h1.6 v4.1 h-1.6 zM1018.6 121.9 h1.6 v24.8 h-1.6 zM1020.2 138.4 h1.6 v12.4 h-1.6 zM1026.6 134.3 h1.6 v4.1 h-1.6 zM1029.8 138.4 h1.6 v12.4 h-1.6 zM1031.4 142.5 h1.6 v8.3 h-1.6 zM1034.6 146.7 h1.6 v8.3 h-1.6 zM1037.8 154.9 h1.6 v4.1 h-1.6 zM1039.4 159.0 h1.6 v12.4 h-1.6 zM1045.8 150.8 h1.6 v4.1 h-1.6 zM1049.0 154.9 h1.6 v4.1 h-1.6 zM1050.6 159.0 h1.6 v8.3 h-1.6 zM1053.8 167.3 h1.6 v20.6 h-1.6 zM1055.4 175.6 h1.6 v37.2 h-1.6 zM1063.4 187.9 h1.6 v4.1 h-1.6 zM1065.0 192.1 h1.6 v8.3 h-1.6 zM1069.8 192.1 h1.6 v4.1 h-1.6 zM1071.4 192.1 h1.6 v24.8 h-1.6 zM1073.0 200.3 h1.6 v33.0 h-1.6 zM1074.6 229.2 h1.6 v8.3 h-1.6 zM1079.4 229.2 h1.6 v8.3 h-1.6 zM1081.0 237.5 h1.6 v4.1 h-1.6 zM1082.6 241.6 h1.6 v8.3 h-1.6 zM1084.2 245.7 h1.6 v4.1 h-1.6 zM1085.8 245.7 h1.6 v20.6 h-1.6 zM1087.4 258.1 h1.6 v8.3 h-1.6 zM1089.0 266.4 h1.6 v4.1 h-1.6 zM1093.8 258.1 h1.6 v8.3 h-1.6 zM1095.4 262.2 h1.6 v12.4 h-1.6 zM1108.2 249.9 h1.6 v16.5 h-1.6 zM1117.8 237.5 h1.6 v4.1 h-1.6 zM1119.4 237.5 h1.6 v8.3 h-1.6 zM1122.6 245.7 h1.6 v16.5 h-1.6 zM1124.2 249.9 h1.6 v4.1 h-1.6 zM1130.6 241.6 h1.6 v4.1 h-1.6 zM1141.8 233.4 h1.6 v8.3 h-1.6 zM1143.4 237.5 h1.6 v8.3 h-1.6 zM1145.0 237.5 h1.6 v20.6 h-1.6 zM1153.0 241.6 h1.6 v8.3 h-1.6 zM1154.6 249.9 h1.6 v4.1 h-1.6 zM1156.2 254.0 h1.6 v8.3 h-1.6 zM1157.8 249.9 h1.6 v28.9 h-1.6 zM1165.8 241.6 h1.6 v8.3 h-1.6 zM1167.4 249.9 h1.6 v8.3 h-1.6 zM1169.0 258.1 h1.6 v4.1 h-1.6 zM1170.6 262.2 h1.6 v8.3 h-1.6 zM1194.6 192.1 h1.6 v8.3 h-1.6 zM1196.2 200.3 h1.6 v12.4 h-1.6 zM1204.2 179.7 h1.6 v28.9 h-1.6 zM1215.4 196.2 h1.6 v4.1 h-1.6 zM1217.0 200.3 h1.6 v4.1 h-1.6 zM1225.0 175.6 h1.6 v8.3 h-1.6 zM1226.6 179.7 h1.6 v33.0 h-1.6 zM1228.2 196.2 h1.6 v16.5 h-1.6 zM1229.8 196.2 h1.6 v20.6 h-1.6 zM1231.4 216.8 h1.6 v4.1 h-1.6 zM1242.6 187.9 h1.6 v24.8 h-1.6 zM1250.6 183.8 h1.6 v8.3 h-1.6 zM1261.8 163.2 h1.6 v4.1 h-1.6 zM1263.4 163.2 h1.6 v8.3 h-1.6 zM1265.0 171.4 h1.6 v4.1 h-1.6 zM1266.6 171.4 h1.6 v8.3 h-1.6 zM1268.2 175.6 h1.6 v8.3 h-1.6 zM1271.4 183.8 h1.6 v12.4 h-1.6 zM1273.0 196.2 h1.6 v8.3 h-1.6 zM1285.8 154.9 h1.6 v12.4 h-1.6 zM1287.4 163.2 h1.6 v8.3 h-1.6 zM1306.6 101.3 h1.6 v16.5 h-1.6 zM1308.2 93.0 h1.6 v41.3 h-1.6 zM1309.8 113.6 h1.6 v16.5 h-1.6 zM1314.6 117.8 h1.6 v12.4 h-1.6 zM1316.2 126.0 h1.6 v8.3 h-1.6 zM1322.6 113.6 h1.6 v24.8 h-1.6 zM1324.2 138.4 h1.6 v8.3 h-1.6 zM1325.8 146.7 h1.6 v4.1 h-1.6 zM1327.4 150.8 h1.6 v12.4 h-1.6 zM1346.6 97.1 h1.6 v8.3 h-1.6 zM1351.4 101.3 h1.6 v16.5 h-1.6 zM1356.2 117.8 h1.6 v4.1 h-1.6 zM1357.8 121.9 h1.6 v12.4 h-1.6 zM1359.4 126.0 h1.6 v16.5 h-1.6 zM1361.0 134.3 h1.6 v8.3 h-1.6 zM1362.6 142.5 h1.6 v20.6 h-1.6 zM1364.2 150.8 h1.6 v33.0 h-1.6 zM1365.8 171.4 h1.6 v16.5 h-1.6 zM1380.2 121.9 h1.6 v24.8 h-1.6 zM1381.8 134.3 h1.6 v12.4 h-1.6 zM1383.4 146.7 h1.6 v8.3 h-1.6 zM1385.0 142.5 h1.6 v20.6 h-1.6 zM1386.6 163.2 h1.6 v4.1 h-1.6 zM1388.2 167.3 h1.6 v8.3 h-1.6 zM1389.8 175.6 h1.6 v8.3 h-1.6 zM1391.4 179.7 h1.6 v12.4 h-1.6 zM1393.0 187.9 h1.6 v12.4 h-1.6 zM1399.4 171.4 h1.6 v16.5 h-1.6 zM1401.0 179.7 h1.6 v16.5 h-1.6 zM1402.6 183.8 h1.6 v16.5 h-1.6 zM1407.4 200.3 h1.6 v4.1 h-1.6 zM1409.0 204.5 h1.6 v4.1 h-1.6 zM1410.6 208.6 h1.6 v4.1 h-1.6 zM1415.4 208.6 h1.6 v8.3 h-1.6 zM1417.0 212.7 h1.6 v12.4 h-1.6 zM1418.6 225.1 h1.6 v8.3 h-1.6 zM1433.0 196.2 h1.6 v12.4 h-1.6 zM1437.8 204.5 h1.6 v4.1 h-1.6 zM1461.8 159.0 h1.6 v4.1 h-1.6 zM1463.4 159.0 h1.6 v12.4 h-1.6 zM1465.0 163.2 h1.6 v8.3 h-1.6 zM1474.6 146.7 h1.6 v20.6 h-1.6 zM1476.2 167.3 h1.6 v8.3 h-1.6 zM1477.8 175.6 h1.6 v8.3 h-1.6 zM1487.4 167.3 h1.6 v8.3 h-1.6 zM1489.0 171.4 h1.6 v8.3 h-1.6 zM1490.6 175.6 h1.6 v20.6 h-1.6 zM1492.2 187.9 h1.6 v8.3 h-1.6 zM1505.0 171.4 h1.6 v4.1 h-1.6 zM1506.6 175.6 h1.6 v12.4 h-1.6 zM1509.8 187.9 h1.6 v8.3 h-1.6 zM1522.6 183.8 h1.6 v8.3 h-1.6 zM1524.2 187.9 h1.6 v4.1 h-1.6 zM1525.8 192.1 h1.6 v12.4 h-1.6 zM1533.8 175.6 h1.6 v16.5 h-1.6 zM1549.8 192.1 h1.6 v8.3 h-1.6 zM1553.0 196.2 h1.6 v16.5 h-1.6 zM1559.4 204.5 h1.6 v4.1 h-1.6 zM1562.6 204.5 h1.6 v12.4 h-1.6 zM1565.8 225.1 h1.6 v12.4 h-1.6 zM1633.0 241.6 h1.6 v8.3 h-1.6 zM1645.8 270.5 h1.6 v4.1 h-1.6 zM1650.6 274.6 h1.6 v12.4 h-1.6 zM1653.8 278.8 h1.6 v8.3 h-1.6 zM1655.4 287.0 h1.6 v4.1 h-1.6 zM1657.0 291.1 h1.6 v8.3 h-1.6 zM1663.4 274.6 h1.6 v12.4 h-1.6 zM1666.6 282.9 h1.6 v8.3 h-1.6 zM1668.2 278.8 h1.6 v16.5 h-1.6 zM1685.8 274.6 h1.6 v4.1 h-1.6 zM1687.4 278.8 h1.6 v4.1 h-1.6 zM1692.2 266.4 h1.6 v8.3 h-1.6 zM1693.8 274.6 h1.6 v8.3 h-1.6 zM1695.4 278.8 h1.6 v8.3 h-1.6 zM1698.6 287.0 h1.6 v4.1 h-1.6 zM1705.0 282.9 h1.6 v8.3 h-1.6 zM1724.2 221.0 h1.6 v41.3 h-1.6 zM1725.8 237.5 h1.6 v37.2 h-1.6 zM1730.6 258.1 h1.6 v24.8 h-1.6 zM1732.2 266.4 h1.6 v49.5 h-1.6 zM1733.8 282.9 h1.6 v45.4 h-1.6 zM1741.8 287.0 h1.6 v45.4 h-1.6 zM1743.4 307.7 h1.6 v37.2 h-1.6 zM1751.4 303.5 h1.6 v20.6 h-1.6 zM1762.6 266.4 h1.6 v16.5 h-1.6 zM1764.2 270.5 h1.6 v12.4 h-1.6 zM1765.8 278.8 h1.6 v8.3 h-1.6 zM1775.4 204.5 h1.6 v28.9 h-1.6 zM1777.0 212.7 h1.6 v37.2 h-1.6 zM1778.6 245.7 h1.6 v24.8 h-1.6 zM1780.2 254.0 h1.6 v24.8 h-1.6 zM1781.8 270.5 h1.6 v16.5 h-1.6 zM1783.4 278.8 h1.6 v8.3 h-1.6 zM1793.0 237.5 h1.6 v20.6 h-1.6 zM1794.6 254.0 h1.6 v20.6 h-1.6 zM1809.0 221.0 h1.6 v12.4 h-1.6 zM1810.6 229.2 h1.6 v4.1 h-1.6 zM1818.6 204.5 h1.6 v20.6 h-1.6 zM1855.4 204.5 h1.6 v16.5 h-1.6 zM1861.8 225.1 h1.6 v12.4 h-1.6 zM1882.6 216.8 h1.6 v4.1 h-1.6 zM1903.4 212.7 h1.6 v12.4 h-1.6 z" fill="#0a84ff"/>
<path d="M18.6 278.8 h1.6 v20.6 h-1.6 zM68.2 287.0 h1.6 v4.1 h-1.6 zM69.8 282.9 h1.6 v4.1 h-1.6 zM105.0 315.9 h1.6 v16.5 h-1.6 zM133.8 320.0 h1.6 v8.3 h-1.6 zM140.2 320.0 h1.6 v4.1 h-1.6 zM141.8 315.9 h1.6 v4.1 h-1.6 zM145.0 311.8 h1.6 v4.1 h-1.6 zM153.0 315.9 h1.6 v16.5 h-1.6 zM167.4 336.6 h1.6 v8.3 h-1.6 zM169.0 332.4 h1.6 v8.3 h-1.6 zM170.6 324.2 h1.6 v8.3 h-1.6 zM172.2 315.9 h1.6 v12.4 h-1.6 zM175.4 307.7 h1.6 v16.5 h-1.6 zM177.0 299.4 h1.6 v16.5 h-1.6 zM178.6 291.1 h1.6 v12.4 h-1.6 zM181.8 295.3 h1.6 v4.1 h-1.6 zM186.6 303.5 h1.6 v4.1 h-1.6 zM191.4 303.5 h1.6 v8.3 h-1.6 zM193.0 299.4 h1.6 v4.1 h-1.6 zM196.2 287.0 h1.6 v16.5 h-1.6 zM205.8 303.5 h1.6 v4.1 h-1.6 zM209.0 299.4 h1.6 v8.3 h-1.6 zM210.6 287.0 h1.6 v12.4 h-1.6 zM212.2 282.9 h1.6 v8.3 h-1.6 zM226.6 295.3 h1.6 v8.3 h-1.6 zM233.0 295.3 h1.6 v20.6 h-1.6 zM236.2 295.3 h1.6 v8.3 h-1.6 zM245.8 303.5 h1.6 v4.1 h-1.6 zM247.4 295.3 h1.6 v8.3 h-1.6 zM249.0 291.1 h1.6 v8.3 h-1.6 zM250.6 287.0 h1.6 v4.1 h-1.6 zM257.0 303.5 h1.6 v4.1 h-1.6 zM258.6 299.4 h1.6 v4.1 h-1.6 zM260.2 295.3 h1.6 v8.3 h-1.6 zM261.8 291.1 h1.6 v4.1 h-1.6 zM263.4 270.5 h1.6 v20.6 h-1.6 zM265.0 245.7 h1.6 v33.0 h-1.6 zM266.6 216.8 h1.6 v41.3 h-1.6 zM269.8 229.2 h1.6 v12.4 h-1.6 zM274.6 237.5 h1.6 v8.3 h-1.6 zM281.0 221.0 h1.6 v20.6 h-1.6 zM282.6 221.0 h1.6 v8.3 h-1.6 zM284.2 212.7 h1.6 v8.3 h-1.6 zM287.4 200.3 h1.6 v12.4 h-1.6 zM289.0 196.2 h1.6 v12.4 h-1.6 zM292.2 183.8 h1.6 v16.5 h-1.6 zM295.4 187.9 h1.6 v12.4 h-1.6 zM297.0 183.8 h1.6 v8.3 h-1.6 zM298.6 179.7 h1.6 v20.6 h-1.6 zM322.6 208.6 h1.6 v4.1 h-1.6 zM338.6 216.8 h1.6 v16.5 h-1.6 zM340.2 221.0 h1.6 v4.1 h-1.6 zM348.2 221.0 h1.6 v8.3 h-1.6 zM349.8 212.7 h1.6 v8.3 h-1.6 zM354.6 221.0 h1.6 v4.1 h-1.6 zM356.2 216.8 h1.6 v4.1 h-1.6 zM362.6 221.0 h1.6 v16.5 h-1.6 zM364.2 216.8 h1.6 v8.3 h-1.6 zM365.8 204.5 h1.6 v12.4 h-1.6 zM367.4 204.5 h1.6 v8.3 h-1.6 zM369.0 196.2 h1.6 v8.3 h-1.6 zM370.6 192.1 h1.6 v4.1 h-1.6 zM378.6 187.9 h1.6 v4.1 h-1.6 zM383.4 179.7 h1.6 v8.3 h-1.6 zM394.6 187.9 h1.6 v8.3 h-1.6 zM399.4 183.8 h1.6 v4.1 h-1.6 zM402.6 179.7 h1.6 v8.3 h-1.6 zM404.2 175.6 h1.6 v4.1 h-1.6 zM407.4 171.4 h1.6 v4.1 h-1.6 zM415.4 233.4 h1.6 v4.1 h-1.6 zM417.0 221.0 h1.6 v16.5 h-1.6 zM418.6 216.8 h1.6 v12.4 h-1.6 zM425.0 225.1 h1.6 v4.1 h-1.6 zM436.2 233.4 h1.6 v8.3 h-1.6 zM437.8 229.2 h1.6 v4.1 h-1.6 zM439.4 221.0 h1.6 v8.3 h-1.6 zM452.2 221.0 h1.6 v16.5 h-1.6 zM461.8 225.1 h1.6 v16.5 h-1.6 zM463.4 233.4 h1.6 v4.1 h-1.6 zM465.0 229.2 h1.6 v4.1 h-1.6 zM479.4 229.2 h1.6 v16.5 h-1.6 zM482.6 229.2 h1.6 v8.3 h-1.6 zM490.6 229.2 h1.6 v4.1 h-1.6 zM500.2 225.1 h1.6 v4.1 h-1.6 zM521.0 233.4 h1.6 v4.1 h-1.6 zM530.6 237.5 h1.6 v8.3 h-1.6 zM554.6 249.9 h1.6 v4.1 h-1.6 zM570.6 249.9 h1.6 v4.1 h-1.6 zM572.2 233.4 h1.6 v20.6 h-1.6 zM573.8 241.6 h1.6 v4.1 h-1.6 zM583.4 254.0 h1.6 v8.3 h-1.6 zM607.4 254.0 h1.6 v8.3 h-1.6 zM609.0 241.6 h1.6 v20.6 h-1.6 zM610.6 249.9 h1.6 v4.1 h-1.6 zM612.2 245.7 h1.6 v4.1 h-1.6 zM628.2 249.9 h1.6 v4.1 h-1.6 zM637.8 254.0 h1.6 v4.1 h-1.6 zM642.6 254.0 h1.6 v4.1 h-1.6 zM644.2 241.6 h1.6 v12.4 h-1.6 zM647.4 241.6 h1.6 v8.3 h-1.6 zM653.8 237.5 h1.6 v4.1 h-1.6 zM665.0 237.5 h1.6 v4.1 h-1.6 zM666.6 233.4 h1.6 v4.1 h-1.6 zM668.2 229.2 h1.6 v4.1 h-1.6 zM669.8 221.0 h1.6 v12.4 h-1.6 zM671.4 212.7 h1.6 v16.5 h-1.6 zM676.2 216.8 h1.6 v8.3 h-1.6 zM679.4 212.7 h1.6 v4.1 h-1.6 zM681.0 208.6 h1.6 v4.1 h-1.6 zM682.6 200.3 h1.6 v12.4 h-1.6 zM697.0 204.5 h1.6 v4.1 h-1.6 zM725.8 245.7 h1.6 v12.4 h-1.6 zM735.4 278.8 h1.6 v4.1 h-1.6 zM737.0 270.5 h1.6 v8.3 h-1.6 zM740.2 266.4 h1.6 v4.1 h-1.6 zM741.8 249.9 h1.6 v16.5 h-1.6 zM746.6 274.6 h1.6 v16.5 h-1.6 zM749.8 270.5 h1.6 v4.1 h-1.6 zM751.4 266.4 h1.6 v4.1 h-1.6 zM753.0 254.0 h1.6 v12.4 h-1.6 zM754.6 225.1 h1.6 v33.0 h-1.6 zM756.2 229.2 h1.6 v24.8 h-1.6 zM762.6 233.4 h1.6 v4.1 h-1.6 zM764.2 225.1 h1.6 v8.3 h-1.6 zM772.2 233.4 h1.6 v4.1 h-1.6 zM780.2 229.2 h1.6 v8.3 h-1.6 zM783.4 233.4 h1.6 v4.1 h-1.6 zM786.6 233.4 h1.6 v4.1 h-1.6 zM793.0 237.5 h1.6 v8.3 h-1.6 zM796.2 233.4 h1.6 v4.1 h-1.6 zM797.8 229.2 h1.6 v4.1 h-1.6 zM799.4 216.8 h1.6 v12.4 h-1.6 zM801.0 216.8 h1.6 v8.3 h-1.6 zM802.6 212.7 h1.6 v4.1 h-1.6 zM810.6 212.7 h1.6 v4.1 h-1.6 zM812.2 208.6 h1.6 v4.1 h-1.6 zM813.8 204.5 h1.6 v8.3 h-1.6 zM815.4 192.1 h1.6 v12.4 h-1.6 zM817.0 187.9 h1.6 v8.3 h-1.6 zM820.2 183.8 h1.6 v4.1 h-1.6 zM839.4 212.7 h1.6 v8.3 h-1.6 zM844.2 208.6 h1.6 v8.3 h-1.6 zM845.8 204.5 h1.6 v4.1 h-1.6 zM849.0 200.3 h1.6 v4.1 h-1.6 zM858.6 200.3 h1.6 v4.1 h-1.6 zM860.2 192.1 h1.6 v8.3 h-1.6 zM861.8 192.1 h1.6 v4.1 h-1.6 zM863.4 187.9 h1.6 v4.1 h-1.6 zM871.4 179.7 h1.6 v12.4 h-1.6 zM877.8 167.3 h1.6 v12.4 h-1.6 zM879.4 163.2 h1.6 v8.3 h-1.6 zM881.0 150.8 h1.6 v12.4 h-1.6 zM882.6 150.8 h1.6 v8.3 h-1.6 zM884.2 142.5 h1.6 v8.3 h-1.6 zM889.0 130.2 h1.6 v28.9 h-1.6 zM890.6 109.5 h1.6 v41.3 h-1.6 zM892.2 109.5 h1.6 v12.4 h-1.6 zM895.4 101.3 h1.6 v16.5 h-1.6 zM897.0 97.1 h1.6 v12.4 h-1.6 zM898.6 93.0 h1.6 v4.1 h-1.6 zM908.2 134.3 h1.6 v8.3 h-1.6 zM909.8 130.2 h1.6 v4.1 h-1.6 zM911.4 121.9 h1.6 v8.3 h-1.6 zM930.6 138.4 h1.6 v8.3 h-1.6 zM932.2 130.2 h1.6 v20.6 h-1.6 zM935.4 130.2 h1.6 v4.1 h-1.6 zM946.6 134.3 h1.6 v12.4 h-1.6 zM948.2 121.9 h1.6 v16.5 h-1.6 zM949.8 126.0 h1.6 v8.3 h-1.6 zM957.8 130.2 h1.6 v4.1 h-1.6 zM961.0 130.2 h1.6 v8.3 h-1.6 zM967.4 130.2 h1.6 v4.1 h-1.6 zM972.2 130.2 h1.6 v4.1 h-1.6 zM975.4 126.0 h1.6 v4.1 h-1.6 zM981.8 121.9 h1.6 v4.1 h-1.6 zM986.6 121.9 h1.6 v4.1 h-1.6 zM988.2 113.6 h1.6 v20.6 h-1.6 zM991.4 109.5 h1.6 v8.3 h-1.6 zM1015.4 121.9 h1.6 v24.8 h-1.6 zM1017.0 121.9 h1.6 v8.3 h-1.6 zM1021.8 130.2 h1.6 v20.6 h-1.6 zM1023.4 134.3 h1.6 v12.4 h-1.6 zM1041.0 159.0 h1.6 v12.4 h-1.6 zM1042.6 150.8 h1.6 v8.3 h-1.6 zM1044.2 150.8 h1.6 v16.5 h-1.6 zM1057.0 183.8 h1.6 v24.8 h-1.6 zM1058.6 187.9 h1.6 v24.8 h-1.6 zM1060.2 187.9 h1.6 v4.1 h-1.6 zM1068.2 187.9 h1.6 v12.4 h-1.6 zM1077.8 233.4 h1.6 v4.1 h-1.6 zM1090.6 258.1 h1.6 v12.4 h-1.6 zM1097.0 258.1 h1.6 v20.6 h-1.6 zM1098.6 262.2 h1.6 v16.5 h-1.6 zM1100.2 258.1 h1.6 v4.1 h-1.6 zM1105.0 254.0 h1.6 v4.1 h-1.6 zM1106.6 249.9 h1.6 v4.1 h-1.6 zM1113.0 249.9 h1.6 v4.1 h-1.6 zM1114.6 241.6 h1.6 v8.3 h-1.6 zM1116.2 237.5 h1.6 v4.1 h-1.6 zM1125.8 249.9 h1.6 v8.3 h-1.6 zM1127.4 245.7 h1.6 v8.3 h-1.6 zM1129.0 229.2 h1.6 v16.5 h-1.6 zM1135.4 241.6 h1.6 v8.3 h-1.6 zM1140.2 237.5 h1.6 v4.1 h-1.6 zM1146.6 245.7 h1.6 v4.1 h-1.6 zM1149.8 241.6 h1.6 v4.1 h-1.6 zM1159.4 262.2 h1.6 v4.1 h-1.6 zM1162.6 249.9 h1.6 v12.4 h-1.6 zM1164.2 241.6 h1.6 v8.3 h-1.6 zM1175.4 266.4 h1.6 v16.5 h-1.6 zM1177.0 258.1 h1.6 v8.3 h-1.6 zM1178.6 249.9 h1.6 v8.3 h-1.6 zM1180.2 245.7 h1.6 v8.3 h-1.6 zM1183.4 229.2 h1.6 v28.9 h-1.6 zM1185.0 229.2 h1.6 v8.3 h-1.6 zM1186.6 221.0 h1.6 v8.3 h-1.6 zM1188.2 212.7 h1.6 v8.3 h-1.6 zM1189.8 200.3 h1.6 v12.4 h-1.6 zM1191.4 196.2 h1.6 v4.1 h-1.6 zM1193.0 192.1 h1.6 v4.1 h-1.6 zM1199.4 200.3 h1.6 v12.4 h-1.6 zM1201.0 187.9 h1.6 v16.5 h-1.6 zM1202.6 179.7 h1.6 v12.4 h-1.6 zM1207.4 200.3 h1.6 v4.1 h-1.6 zM1210.6 196.2 h1.6 v4.1 h-1.6 zM1218.6 200.3 h1.6 v8.3 h-1.6 zM1220.2 183.8 h1.6 v24.8 h-1.6 zM1221.8 179.7 h1.6 v4.1 h-1.6 zM1223.4 175.6 h1.6 v4.1 h-1.6 zM1234.6 212.7 h1.6 v8.3 h-1.6 zM1236.2 204.5 h1.6 v8.3 h-1.6 zM1237.8 192.1 h1.6 v12.4 h-1.6 zM1239.4 175.6 h1.6 v20.6 h-1.6 zM1245.8 192.1 h1.6 v8.3 h-1.6 zM1247.4 175.6 h1.6 v20.6 h-1.6 zM1252.2 171.4 h1.6 v20.6 h-1.6 zM1253.8 175.6 h1.6 v16.5 h-1.6 zM1255.4 163.2 h1.6 v12.4 h-1.6 zM1257.0 163.2 h1.6 v8.3 h-1.6 zM1274.6 179.7 h1.6 v20.6 h-1.6 zM1276.2 183.8 h1.6 v8.3 h-1.6 zM1277.8 179.7 h1.6 v8.3 h-1.6 zM1279.4 171.4 h1.6 v12.4 h-1.6 zM1281.0 163.2 h1.6 v12.4 h-1.6 zM1282.6 159.0 h1.6 v4.1 h-1.6 zM1284.2 150.8 h1.6 v8.3 h-1.6 zM1293.8 159.0 h1.6 v12.4 h-1.6 zM1295.4 154.9 h1.6 v12.4 h-1.6 zM1298.6 146.7 h1.6 v12.4 h-1.6 zM1300.2 138.4 h1.6 v8.3 h-1.6 zM1301.8 113.6 h1.6 v24.8 h-1.6 zM1303.4 109.5 h1.6 v16.5 h-1.6 zM1305.0 101.3 h1.6 v8.3 h-1.6 zM1311.4 121.9 h1.6 v8.3 h-1.6 zM1313.0 117.8 h1.6 v4.1 h-1.6 zM1317.8 130.2 h1.6 v8.3 h-1.6 zM1321.0 126.0 h1.6 v4.1 h-1.6 zM1329.0 150.8 h1.6 v8.3 h-1.6 zM1330.6 130.2 h1.6 v24.8 h-1.6 zM1332.2 130.2 h1.6 v12.4 h-1.6 zM1333.8 126.0 h1.6 v4.1 h-1.6 zM1335.4 105.4 h1.6 v20.6 h-1.6 zM1337.0 109.5 h1.6 v12.4 h-1.6 zM1340.2 105.4 h1.6 v4.1 h-1.6 zM1341.8 97.1 h1.6 v8.3 h-1.6 zM1345.0 97.1 h1.6 v4.1 h-1.6 zM1367.4 154.9 h1.6 v24.8 h-1.6 zM1369.0 142.5 h1.6 v20.6 h-1.6 zM1370.6 150.8 h1.6 v4.1 h-1.6 zM1372.2 146.7 h1.6 v4.1 h-1.6 zM1373.8 142.5 h1.6 v4.1 h-1.6 zM1377.0 134.3 h1.6 v16.5 h-1.6 zM1378.6 126.0 h1.6 v8.3 h-1.6 zM1394.6 187.9 h1.6 v16.5 h-1.6 zM1396.2 183.8 h1.6 v4.1 h-1.6 zM1397.8 171.4 h1.6 v16.5 h-1.6 zM1413.8 204.5 h1.6 v8.3 h-1.6 zM1420.2 229.2 h1.6 v4.1 h-1.6 zM1421.8 221.0 h1.6 v8.3 h-1.6 zM1423.4 216.8 h1.6 v4.1 h-1.6 zM1425.0 212.7 h1.6 v4.1 h-1.6 zM1426.6 208.6 h1.6 v4.1 h-1.6 zM1428.2 204.5 h1.6 v8.3 h-1.6 zM1431.4 200.3 h1.6 v4.1 h-1.6 zM1441.0 204.5 h1.6 v4.1 h-1.6 zM1442.6 196.2 h1.6 v8.3 h-1.6 zM1447.4 187.9 h1.6 v8.3 h-1.6 zM1449.0 183.8 h1.6 v8.3 h-1.6 zM1450.6 175.6 h1.6 v8.3 h-1.6 zM1453.8 167.3 h1.6 v8.3 h-1.6 zM1457.0 167.3 h1.6 v8.3 h-1.6 zM1458.6 159.0 h1.6 v8.3 h-1.6 zM1460.2 159.0 h1.6 v4.1 h-1.6 zM1469.8 163.2 h1.6 v8.3 h-1.6 zM1471.4 154.9 h1.6 v8.3 h-1.6 zM1479.4 175.6 h1.6 v4.1 h-1.6 zM1481.0 171.4 h1.6 v4.1 h-1.6 zM1485.8 167.3 h1.6 v4.1 h-1.6 zM1497.0 183.8 h1.6 v12.4 h-1.6 zM1498.6 179.7 h1.6 v12.4 h-1.6 zM1501.8 175.6 h1.6 v4.1 h-1.6 zM1503.4 159.0 h1.6 v16.5 h-1.6 zM1514.6 192.1 h1.6 v8.3 h-1.6 zM1519.4 183.8 h1.6 v12.4 h-1.6 zM1530.6 183.8 h1.6 v12.4 h-1.6 zM1538.6 187.9 h1.6 v8.3 h-1.6 zM1541.8 183.8 h1.6 v8.3 h-1.6 zM1543.4 183.8 h1.6 v4.1 h-1.6 zM1557.8 200.3 h1.6 v8.3 h-1.6 zM1581.8 216.8 h1.6 v12.4 h-1.6 zM1617.0 229.2 h1.6 v8.3 h-1.6 zM1620.2 225.1 h1.6 v4.1 h-1.6 zM1658.6 278.8 h1.6 v20.6 h-1.6 zM1661.8 266.4 h1.6 v12.4 h-1.6 zM1671.4 291.1 h1.6 v4.1 h-1.6 zM1673.0 278.8 h1.6 v16.5 h-1.6 zM1674.6 278.8 h1.6 v4.1 h-1.6 zM1676.2 274.6 h1.6 v4.1 h-1.6 zM1689.0 274.6 h1.6 v20.6 h-1.6 zM1690.6 266.4 h1.6 v8.3 h-1.6 zM1703.4 287.0 h1.6 v4.1 h-1.6 zM1706.6 287.0 h1.6 v8.3 h-1.6 zM1713.0 282.9 h1.6 v4.1 h-1.6 zM1714.6 274.6 h1.6 v16.5 h-1.6 zM1716.2 270.5 h1.6 v12.4 h-1.6 zM1717.8 262.2 h1.6 v12.4 h-1.6 zM1719.4 237.5 h1.6 v24.8 h-1.6 zM1721.0 212.7 h1.6 v41.3 h-1.6 zM1722.6 212.7 h1.6 v20.6 h-1.6 zM1727.4 270.5 h1.6 v4.1 h-1.6 zM1729.0 258.1 h1.6 v12.4 h-1.6 zM1735.4 307.7 h1.6 v20.6 h-1.6 zM1737.0 303.5 h1.6 v12.4 h-1.6 zM1738.6 299.4 h1.6 v4.1 h-1.6 zM1740.2 287.0 h1.6 v12.4 h-1.6 zM1745.0 307.7 h1.6 v33.0 h-1.6 zM1746.6 303.5 h1.6 v12.4 h-1.6 zM1754.6 307.7 h1.6 v4.1 h-1.6 zM1756.2 295.3 h1.6 v16.5 h-1.6 zM1757.8 278.8 h1.6 v20.6 h-1.6 zM1759.4 262.2 h1.6 v24.8 h-1.6 zM1761.0 266.4 h1.6 v8.3 h-1.6 zM1769.0 266.4 h1.6 v20.6 h-1.6 zM1770.6 245.7 h1.6 v33.0 h-1.6 zM1772.2 225.1 h1.6 v33.0 h-1.6 zM1773.8 204.5 h1.6 v33.0 h-1.6 zM1786.6 278.8 h1.6 v8.3 h-1.6 zM1788.2 254.0 h1.6 v24.8 h-1.6 zM1789.8 245.7 h1.6 v20.6 h-1.6 zM1791.4 237.5 h1.6 v20.6 h-1.6 zM1799.4 262.2 h1.6 v4.1 h-1.6 zM1801.0 258.1 h1.6 v16.5 h-1.6 zM1802.6 249.9 h1.6 v8.3 h-1.6 zM1804.2 229.2 h1.6 v20.6 h-1.6 zM1805.8 233.4 h1.6 v12.4 h-1.6 zM1807.4 221.0 h1.6 v16.5 h-1.6 zM1813.8 216.8 h1.6 v12.4 h-1.6 zM1841.0 221.0 h1.6 v8.3 h-1.6 zM1873.0 208.6 h1.6 v16.5 h-1.6 zM1890.6 200.3 h1.6 v8.3 h-1.6 zM1897.0 200.3 h1.6 v4.1 h-1.6 zM1906.6 216.8 h1.6 v12.4 h-1.6 zM1911.4 204.5 h1.6 v4.1 h-1.6 zM1913.0 200.3 h1.6 v8.3 h-1.6 zM1925.8 200.3 h1.6 v16.5 h-1.6 z" fill="#ff0000"/>
</g>
<rect x="1931.2" y="183.6" width="93.4" height="34.6" fill="#d2d2d2"/>
<g filter="url(#tb)"><text class="m" xml:space="preserve" transform="translate(1952.0 205.0) scale(0.800 1)" x="0.7 16.0 25.7 38.2 50.7" fill="#000" font-size="20" font-weight="bold">7,649</text></g>
</g>
<g>
<rect x="9.2" y="405.0" width="2015.4" height="351.2" fill="#1a1a1a"/>
<rect x="9.4" y="404.6" width="1923.4" height="329.0" fill="#fff"/>
<rect x="11.1" y="407.8" width="1919.5" height="323.4" fill="#000"/>
<rect x="9.4" y="404.8" width="1923.4" height="0.9" fill="#c4c4c4"/>
<path d="M38.3 407.8 V731.2 M93.0 407.8 V731.2 M129.1 407.8 V731.2 M130.7 407.8 V731.2 M154.0 407.8 V731.2 M249.3 407.8 V731.2 M346.3 407.8 V731.2 M440.0 407.8 V731.2 M530.5 407.8 V731.2 M618.0 407.8 V731.2 M713.0 407.8 V731.2 M730.0 407.8 V731.2 M777.0 407.8 V731.2 M871.0 407.8 V731.2 M966.3 407.8 V731.2 M1056.8 407.8 V731.2 M1153.5 407.8 V731.2 M1248.8 407.8 V731.2 M1344.3 407.8 V731.2 M1441.0 407.8 V731.2 M1536.3 407.8 V731.2 M1627.0 407.8 V731.2 M1717.5 407.8 V731.2 M1812.5 407.8 V731.2 M1885.0 407.8 V731.2 M1925.6 407.8 V731.2" stroke="#d8d8d8" stroke-width="1.6" stroke-dasharray="1.6 1.6" fill="none"/>
<path d="M11.1 480.8 H1930.6 M11.1 569.8 H1930.6 M11.1 658.7 H1930.6" stroke="#d8d8d8" stroke-width="1.6" stroke-dasharray="1.6 1.6" fill="none"/>
<g filter="url(#tb)">
<text class="m" xml:space="preserve" transform="translate(40.0 747.8) scale(0.760 1)" x="0.5 13.1" fill="#e4e4e4" font-size="21">04</text>
<text class="m" xml:space="preserve" transform="translate(95.0 747.8) scale(0.760 1)" x="0.5 13.1" fill="#e4e4e4" font-size="21">06</text>
<text class="m" xml:space="preserve" transform="translate(104.6 747.8) scale(0.760 1)" x="0.5 13.1" fill="#e4e4e4" font-size="21">07</text>
<text class="m" xml:space="preserve" transform="translate(107.4 747.8) scale(0.760 1)" x="0.5 13.1" fill="#e4e4e4" font-size="21">08</text>
<text class="m" xml:space="preserve" transform="translate(156.0 747.8) scale(0.760 1)" x="0.5 13.1" fill="#e4e4e4" font-size="21">09</text>
<text class="m" xml:space="preserve" transform="translate(252.0 747.8) scale(0.760 1)" x="0.5 13.1" fill="#e4e4e4" font-size="21">10</text>
<text class="m" xml:space="preserve" transform="translate(348.8 747.8) scale(0.760 1)" x="0.5 13.1" fill="#e4e4e4" font-size="21">11</text>
<text class="m" xml:space="preserve" transform="translate(443.0 747.8) scale(0.760 1)" x="0.5 13.1" fill="#e4e4e4" font-size="21">12</text>
<text class="m" xml:space="preserve" transform="translate(533.5 747.8) scale(0.760 1)" x="0.5 13.1" fill="#e4e4e4" font-size="21">13</text>
<text class="m" xml:space="preserve" transform="translate(621.0 747.8) scale(0.760 1)" x="0.5 13.1" fill="#e4e4e4" font-size="21">14</text>
<text class="m" xml:space="preserve" transform="translate(691.0 747.8) scale(0.760 1)" x="0.5 13.1" fill="#e4e4e4" font-size="21">15</text>
<text class="m" xml:space="preserve" transform="translate(733.5 747.8) scale(0.760 1)" x="0.5 13.1" fill="#e4e4e4" font-size="21">16</text>
<text class="m" xml:space="preserve" transform="translate(780.5 747.8) scale(0.760 1)" x="0.5 13.1" fill="#e4e4e4" font-size="21">17</text>
<text class="m" xml:space="preserve" transform="translate(874.0 747.8) scale(0.760 1)" x="0.5 13.1" fill="#e4e4e4" font-size="21">18</text>
<text class="m" xml:space="preserve" transform="translate(969.5 747.8) scale(0.760 1)" x="0.5 13.1" fill="#e4e4e4" font-size="21">19</text>
<text class="m" xml:space="preserve" transform="translate(1059.5 747.8) scale(0.760 1)" x="0.5 13.1" fill="#e4e4e4" font-size="21">20</text>
<text class="m" xml:space="preserve" transform="translate(1156.0 747.8) scale(0.760 1)" x="0.5 13.1" fill="#e4e4e4" font-size="21">21</text>
<text class="m" xml:space="preserve" transform="translate(1251.5 747.8) scale(0.760 1)" x="0.5 13.1" fill="#e4e4e4" font-size="21">22</text>
<text class="m" xml:space="preserve" transform="translate(1347.0 747.8) scale(0.760 1)" x="0.5 13.1" fill="#e4e4e4" font-size="21">23</text>
<text class="m" xml:space="preserve" transform="translate(1443.5 747.8) scale(0.760 1)" x="0.5 13.1" fill="#e4e4e4" font-size="21">00</text>
<text class="m" xml:space="preserve" transform="translate(1539.0 747.8) scale(0.760 1)" x="0.5 13.1" fill="#e4e4e4" font-size="21">01</text>
<text class="m" xml:space="preserve" transform="translate(1629.5 747.8) scale(0.760 1)" x="0.5 13.1" fill="#e4e4e4" font-size="21">02</text>
<text class="m" xml:space="preserve" transform="translate(1720.0 747.8) scale(0.760 1)" x="0.5 13.1" fill="#e4e4e4" font-size="21">03</text>
<text class="m" xml:space="preserve" transform="translate(1815.0 747.8) scale(0.760 1)" x="0.5 13.1" fill="#e4e4e4" font-size="21">04</text>
<text class="m" xml:space="preserve" transform="translate(1887.0 747.8) scale(0.760 1)" x="0.5 13.1" fill="#e4e4e4" font-size="21">05</text>
<text class="m" xml:space="preserve" transform="translate(1903.6 747.8) scale(0.760 1)" x="0.5 13.1" fill="#e4e4e4" font-size="21">06</text>
<text class="m" xml:space="preserve" transform="translate(1443.5 723.2) scale(0.760 1)" x="0.5 13.1" fill="#e4e4e4" font-size="21">07</text>
<clipPath id="c1"><rect x="1930" y="405.0" width="100" height="351.2"/></clipPath>
<g clip-path="url(#c1)">
<text class="m" xml:space="preserve" transform="translate(1933.6 477.4) scale(0.760 1)" x="0.5 16.0 25.7 38.4 51.0" fill="#e4e4e4" font-size="21">3,800</text>
<text class="m" xml:space="preserve" transform="translate(1933.6 566.4) scale(0.760 1)" x="0.5 16.0 25.7 38.4 51.0" fill="#e4e4e4" font-size="21">3,775</text>
<text class="m" xml:space="preserve" transform="translate(1933.6 655.3) scale(0.760 1)" x="0.5 16.0 25.7 38.4 51.0" fill="#e4e4e4" font-size="21">3,750</text>
<text class="m" xml:space="preserve" transform="translate(1933.6 746.6) scale(0.760 1)" x="0.5 16.0 25.7 38.4 51.0" fill="#e4e4e4" font-size="21">3,725</text>
</g>
<text class="j" x="10.9 30.1" y="428.0" fill="#e4e4e4" font-size="20.4">時刻</text><text class="m" xml:space="preserve" transform="translate(49.9 427.0) scale(0.760 1)" x="3.4 13.1 25.7 41.3 51.0 63.6 79.2" fill="#e4e4e4" font-size="21">:06:00 </text><text class="j" x="116.5 135.7" y="428.0" fill="#e4e4e4" font-size="20.4">始値</text><text class="m" xml:space="preserve" transform="translate(155.5 427.0) scale(0.760 1)" x="3.4 15.5 28.1 40.7 53.9" fill="#e4e4e4" font-size="21">:--- </text><text class="j" x="202.9 222.1" y="428.0" fill="#e4e4e4" font-size="20.4">高値</text><text class="m" xml:space="preserve" transform="translate(241.9 427.0) scale(0.760 1)" x="3.4 15.5 28.1 40.7 53.9" fill="#e4e4e4" font-size="21">:--- </text><text class="j" x="289.3 308.5" y="428.0" fill="#e4e4e4" font-size="20.4">安値</text><text class="m" xml:space="preserve" transform="translate(328.3 427.0) scale(0.760 1)" x="3.4 15.5 28.1 40.7 53.9" fill="#e4e4e4" font-size="21">:--- </text><text class="j" x="375.7 394.9" y="428.0" fill="#e4e4e4" font-size="20.4">終値</text><text class="m" xml:space="preserve" transform="translate(414.7 427.0) scale(0.760 1)" x="3.4 15.5 28.1 40.7" fill="#e4e4e4" font-size="21">:---</text>
</g>
<g filter="url(#bl)">
<path d="M41.0 466.6 h4.8 v1.6 h-4.8 zM44.2 466.6 h1.6 v5.2 h-1.6 zM50.6 473.7 h3.2 v1.6 h-3.2 zM53.8 473.7 h1.6 v1.6 h-1.6 zM63.4 477.2 h1.6 v3.6 h-1.6 zM76.2 480.8 h1.6 v1.6 h-1.6 zM85.8 487.9 h1.6 v3.6 h-1.6 zM87.4 484.4 h4.8 v1.6 h-4.8 zM106.6 463.0 h1.6 v1.6 h-1.6 zM124.2 477.2 h3.2 v1.6 h-3.2 zM133.8 484.4 h1.6 v1.6 h-1.6 zM135.4 484.4 h1.6 v1.6 h-1.6 zM137.0 480.8 h1.6 v5.2 h-1.6 zM138.6 484.4 h1.6 v1.6 h-1.6 zM140.2 484.4 h1.6 v1.6 h-1.6 zM143.4 480.8 h1.6 v1.6 h-1.6 zM153.0 498.6 h1.6 v1.6 h-1.6 zM156.2 495.0 h1.6 v1.6 h-1.6 zM162.6 491.5 h1.6 v5.2 h-1.6 zM170.6 502.2 h1.6 v3.6 h-1.6 zM175.4 495.0 h1.6 v1.6 h-1.6 zM180.2 502.2 h1.6 v1.6 h-1.6 zM183.4 498.6 h1.6 v1.6 h-1.6 zM185.0 498.6 h1.6 v1.6 h-1.6 zM188.2 502.2 h1.6 v1.6 h-1.6 zM193.0 502.2 h1.6 v1.6 h-1.6 zM201.0 491.5 h1.6 v1.6 h-1.6 zM202.6 491.5 h1.6 v1.6 h-1.6 zM204.2 491.5 h1.6 v1.6 h-1.6 zM209.0 495.0 h1.6 v1.6 h-1.6 zM236.2 523.5 h1.6 v7.1 h-1.6 zM237.8 527.1 h1.6 v1.6 h-1.6 zM241.0 523.5 h1.6 v1.6 h-1.6 zM257.0 512.8 h1.6 v1.6 h-1.6 zM260.2 505.7 h1.6 v1.6 h-1.6 zM274.6 502.2 h1.6 v5.2 h-1.6 zM276.2 505.7 h1.6 v1.6 h-1.6 zM279.4 502.2 h1.6 v1.6 h-1.6 zM285.8 484.4 h1.6 v1.6 h-1.6 zM289.0 477.2 h1.6 v5.2 h-1.6 zM292.2 480.8 h1.6 v1.6 h-1.6 zM303.4 491.5 h1.6 v1.6 h-1.6 zM305.0 484.4 h1.6 v5.2 h-1.6 zM316.2 491.5 h1.6 v5.2 h-1.6 zM319.4 498.6 h1.6 v1.6 h-1.6 zM322.6 502.2 h3.2 v1.6 h-3.2 zM329.0 487.9 h1.6 v1.6 h-1.6 zM345.0 491.5 h1.6 v1.6 h-1.6 zM346.6 491.5 h1.6 v1.6 h-1.6 zM353.0 487.9 h1.6 v1.6 h-1.6 zM354.6 487.9 h1.6 v1.6 h-1.6 zM356.2 487.9 h1.6 v1.6 h-1.6 zM359.4 491.5 h1.6 v1.6 h-1.6 zM362.6 491.5 h1.6 v1.6 h-1.6 zM365.8 484.4 h1.6 v5.2 h-1.6 zM367.4 487.9 h1.6 v1.6 h-1.6 zM372.2 484.4 h1.6 v1.6 h-1.6 zM385.0 463.0 h1.6 v1.6 h-1.6 zM393.0 445.2 h1.6 v1.6 h-1.6 zM407.4 452.3 h1.6 v5.2 h-1.6 zM418.6 484.4 h1.6 v1.6 h-1.6 zM449.0 484.4 h1.6 v1.6 h-1.6 zM452.2 487.9 h1.6 v1.6 h-1.6 zM453.8 487.9 h1.6 v3.6 h-1.6 zM457.0 487.9 h1.6 v1.6 h-1.6 zM458.6 484.4 h1.6 v5.2 h-1.6 zM460.2 487.9 h1.6 v1.6 h-1.6 zM465.0 484.4 h1.6 v1.6 h-1.6 zM477.8 498.6 h1.6 v1.6 h-1.6 zM481.0 498.6 h1.6 v3.6 h-1.6 zM489.0 505.7 h1.6 v1.6 h-1.6 zM495.4 495.0 h1.6 v1.6 h-1.6 zM500.2 491.5 h1.6 v1.6 h-1.6 zM503.4 487.9 h1.6 v1.6 h-1.6 zM505.0 487.9 h1.6 v1.6 h-1.6 zM511.4 487.9 h1.6 v1.6 h-1.6 zM516.2 498.6 h1.6 v1.6 h-1.6 zM517.8 495.0 h1.6 v5.2 h-1.6 zM521.0 495.0 h3.2 v1.6 h-3.2 zM522.6 495.0 h3.2 v1.6 h-3.2 zM524.2 495.0 h1.6 v1.6 h-1.6 zM525.8 495.0 h1.6 v1.6 h-1.6 zM527.4 491.5 h1.6 v5.2 h-1.6 zM530.6 502.2 h1.6 v1.6 h-1.6 zM532.2 498.6 h3.2 v1.6 h-3.2 zM533.8 498.6 h3.2 v1.6 h-3.2 zM540.2 505.7 h3.2 v1.6 h-3.2 zM541.8 502.2 h1.6 v5.2 h-1.6 zM545.0 505.7 h1.6 v1.6 h-1.6 zM546.6 505.7 h1.6 v3.6 h-1.6 zM557.8 498.6 h4.8 v1.6 h-4.8 zM559.4 498.6 h1.6 v1.6 h-1.6 zM561.0 495.0 h1.6 v1.6 h-1.6 zM565.8 502.2 h1.6 v1.6 h-1.6 zM573.8 484.4 h3.2 v1.6 h-3.2 zM575.4 487.9 h1.6 v1.6 h-1.6 zM577.0 487.9 h1.6 v1.6 h-1.6 zM581.8 495.0 h1.6 v1.6 h-1.6 zM583.4 502.2 h3.2 v1.6 h-3.2 zM586.6 502.2 h3.2 v1.6 h-3.2 zM588.2 495.0 h1.6 v5.2 h-1.6 zM593.0 495.0 h1.6 v1.6 h-1.6 zM597.8 495.0 h3.2 v1.6 h-3.2 zM609.0 498.6 h1.6 v5.2 h-1.6 zM621.8 502.2 h3.2 v1.6 h-3.2 zM623.4 502.2 h3.2 v1.6 h-3.2 zM631.4 487.9 h1.6 v1.6 h-1.6 zM633.0 487.9 h1.6 v3.6 h-1.6 zM634.6 484.4 h1.6 v1.6 h-1.6 zM642.6 477.2 h4.8 v1.6 h-4.8 zM644.2 477.2 h4.8 v1.6 h-4.8 zM645.8 473.7 h1.6 v3.6 h-1.6 zM647.4 473.7 h1.6 v1.6 h-1.6 zM649.0 473.7 h3.2 v1.6 h-3.2 zM650.6 473.7 h3.2 v1.6 h-3.2 zM652.2 477.2 h1.6 v1.6 h-1.6 zM653.8 470.1 h1.6 v5.2 h-1.6 zM657.0 473.7 h3.2 v1.6 h-3.2 zM660.2 477.2 h1.6 v1.6 h-1.6 zM661.8 484.4 h3.2 v1.6 h-3.2 zM663.4 477.2 h1.6 v5.2 h-1.6 zM666.6 477.2 h1.6 v3.6 h-1.6 zM671.4 463.0 h3.2 v1.6 h-3.2 zM673.0 455.9 h1.6 v1.6 h-1.6 zM674.6 455.9 h4.8 v1.6 h-4.8 zM677.8 452.3 h1.6 v1.6 h-1.6 zM679.4 452.3 h3.2 v1.6 h-3.2 zM681.0 452.3 h3.2 v1.6 h-3.2 zM682.6 452.3 h1.6 v1.6 h-1.6 zM685.8 455.9 h4.8 v1.6 h-4.8 zM689.0 452.3 h1.6 v5.2 h-1.6 zM690.6 455.9 h4.8 v1.6 h-4.8 zM695.4 455.9 h4.8 v1.6 h-4.8 zM697.0 455.9 h1.6 v1.6 h-1.6 zM701.8 459.4 h1.6 v1.6 h-1.6 zM711.4 470.1 h1.6 v5.2 h-1.6 zM714.6 473.7 h1.6 v1.6 h-1.6 zM717.8 477.2 h1.6 v1.6 h-1.6 zM737.0 477.2 h1.6 v1.6 h-1.6 zM743.4 470.1 h1.6 v1.6 h-1.6 zM751.4 470.1 h1.6 v3.6 h-1.6 zM761.0 452.3 h4.8 v1.6 h-4.8 zM770.6 452.3 h3.2 v1.6 h-3.2 zM785.0 459.4 h3.2 v1.6 h-3.2 zM793.0 452.3 h1.6 v1.6 h-1.6 zM794.6 452.3 h1.6 v1.6 h-1.6 zM805.8 441.6 h3.2 v1.6 h-3.2 zM807.4 441.6 h1.6 v1.6 h-1.6 zM812.2 438.1 h1.6 v7.1 h-1.6 zM813.8 452.3 h3.2 v1.6 h-3.2 zM817.0 448.8 h3.2 v1.6 h-3.2 zM818.6 445.2 h1.6 v1.6 h-1.6 zM828.2 452.3 h1.6 v1.6 h-1.6 zM829.8 452.3 h1.6 v1.6 h-1.6 zM831.4 452.3 h1.6 v3.6 h-1.6 zM833.0 452.3 h1.6 v1.6 h-1.6 zM834.6 455.9 h3.2 v1.6 h-3.2 zM842.6 452.3 h1.6 v1.6 h-1.6 zM847.4 448.8 h3.2 v1.6 h-3.2 zM858.6 463.0 h1.6 v5.2 h-1.6 zM866.6 455.9 h1.6 v5.2 h-1.6 zM890.6 441.6 h3.2 v1.6 h-3.2 zM906.6 452.3 h1.6 v1.6 h-1.6 zM909.8 452.3 h3.2 v1.6 h-3.2 zM916.2 448.8 h3.2 v1.6 h-3.2 zM927.4 448.8 h3.2 v1.6 h-3.2 zM930.6 448.8 h3.2 v1.6 h-3.2 zM933.8 445.2 h4.8 v1.6 h-4.8 zM937.0 441.6 h1.6 v1.6 h-1.6 zM938.6 445.2 h3.2 v1.6 h-3.2 zM949.8 455.9 h1.6 v1.6 h-1.6 zM954.6 455.9 h1.6 v3.6 h-1.6 zM972.2 470.1 h3.2 v1.6 h-3.2 zM980.2 470.1 h4.8 v1.6 h-4.8 zM981.8 466.6 h3.2 v1.6 h-3.2 zM986.6 480.8 h3.2 v1.6 h-3.2 zM989.8 480.8 h3.2 v1.6 h-3.2 zM991.4 477.2 h3.2 v1.6 h-3.2 zM993.0 480.8 h1.6 v1.6 h-1.6 zM1002.6 477.2 h1.6 v5.2 h-1.6 zM1005.8 495.0 h3.2 v1.6 h-3.2 zM1007.4 495.0 h4.8 v1.6 h-4.8 zM1009.0 491.5 h3.2 v1.6 h-3.2 zM1010.6 487.9 h1.6 v1.6 h-1.6 zM1013.8 487.9 h4.8 v1.6 h-4.8 zM1017.0 480.8 h1.6 v1.6 h-1.6 zM1026.6 487.9 h4.8 v1.6 h-4.8 zM1034.6 487.9 h1.6 v3.6 h-1.6 zM1039.4 480.8 h1.6 v5.2 h-1.6 zM1042.6 487.9 h1.6 v1.6 h-1.6 zM1045.8 487.9 h3.2 v1.6 h-3.2 zM1047.4 487.9 h1.6 v3.6 h-1.6 zM1050.6 487.9 h1.6 v5.2 h-1.6 zM1052.2 495.0 h3.2 v1.6 h-3.2 zM1057.0 498.6 h3.2 v1.6 h-3.2 zM1058.6 498.6 h1.6 v5.2 h-1.6 zM1060.2 502.2 h1.6 v1.6 h-1.6 zM1063.4 495.0 h1.6 v5.2 h-1.6 zM1066.6 502.2 h3.2 v1.6 h-3.2 zM1069.8 505.7 h4.8 v1.6 h-4.8 zM1074.6 512.8 h3.2 v1.6 h-3.2 zM1076.2 502.2 h1.6 v1.6 h-1.6 zM1079.4 502.2 h1.6 v1.6 h-1.6 zM1093.8 509.3 h3.2 v1.6 h-3.2 zM1100.2 509.3 h1.6 v1.6 h-1.6 zM1103.4 505.7 h3.2 v1.6 h-3.2 zM1106.6 502.2 h1.6 v1.6 h-1.6 zM1109.8 495.0 h1.6 v5.2 h-1.6 zM1114.6 502.2 h3.2 v1.6 h-3.2 zM1117.8 502.2 h4.8 v1.6 h-4.8 zM1122.6 502.2 h3.2 v1.6 h-3.2 zM1125.8 502.2 h3.2 v1.6 h-3.2 zM1129.0 502.2 h3.2 v1.6 h-3.2 zM1135.4 498.6 h1.6 v3.6 h-1.6 zM1145.0 505.7 h4.8 v1.6 h-4.8 zM1146.6 505.7 h1.6 v1.6 h-1.6 zM1159.4 516.4 h1.6 v1.6 h-1.6 zM1162.6 509.3 h1.6 v3.6 h-1.6 zM1181.8 509.3 h1.6 v1.6 h-1.6 zM1183.4 509.3 h1.6 v1.6 h-1.6 zM1205.8 527.1 h1.6 v1.6 h-1.6 zM1209.0 534.2 h1.6 v1.6 h-1.6 zM1212.2 537.8 h1.6 v3.6 h-1.6 zM1225.0 537.8 h1.6 v1.6 h-1.6 zM1255.4 548.4 h1.6 v1.6 h-1.6 zM1263.4 548.4 h1.6 v3.6 h-1.6 zM1266.6 552.0 h1.6 v1.6 h-1.6 zM1268.2 548.4 h1.6 v5.2 h-1.6 zM1273.0 544.9 h1.6 v1.6 h-1.6 zM1279.4 520.0 h1.6 v5.2 h-1.6 zM1282.6 520.0 h1.6 v1.6 h-1.6 zM1289.0 527.1 h1.6 v1.6 h-1.6 zM1313.0 520.0 h1.6 v1.6 h-1.6 zM1317.8 537.8 h1.6 v1.6 h-1.6 zM1319.4 537.8 h1.6 v3.6 h-1.6 zM1325.8 555.6 h1.6 v3.6 h-1.6 zM1333.8 541.3 h1.6 v1.6 h-1.6 zM1338.6 552.0 h1.6 v1.6 h-1.6 zM1365.8 616.1 h3.2 v1.6 h-3.2 zM1367.4 612.5 h4.8 v1.6 h-4.8 zM1375.4 612.5 h3.2 v1.6 h-3.2 zM1377.0 609.0 h3.2 v1.6 h-3.2 zM1380.2 605.4 h3.2 v1.6 h-3.2 zM1381.8 609.0 h1.6 v5.2 h-1.6 zM1386.6 619.6 h1.6 v1.6 h-1.6 zM1397.8 673.0 h1.6 v1.6 h-1.6 zM1402.6 683.7 h1.6 v5.2 h-1.6 zM1409.0 676.6 h1.6 v5.2 h-1.6 zM1410.6 680.2 h1.6 v3.6 h-1.6 zM1412.2 680.2 h1.6 v1.6 h-1.6 zM1423.4 690.8 h1.6 v1.6 h-1.6 zM1429.8 676.6 h1.6 v1.6 h-1.6 zM1434.6 673.0 h1.6 v1.6 h-1.6 zM1441.0 690.8 h1.6 v1.6 h-1.6 zM1445.8 687.3 h1.6 v5.2 h-1.6 zM1447.4 690.8 h1.6 v1.6 h-1.6 zM1449.0 690.8 h1.6 v1.6 h-1.6 zM1455.4 676.6 h1.6 v1.6 h-1.6 zM1457.0 673.0 h1.6 v5.2 h-1.6 zM1458.6 676.6 h1.6 v1.6 h-1.6 zM1463.4 680.2 h1.6 v1.6 h-1.6 zM1469.8 683.7 h1.6 v1.6 h-1.6 zM1473.0 687.3 h1.6 v1.6 h-1.6 zM1489.0 694.4 h1.6 v1.6 h-1.6 zM1490.6 694.4 h1.6 v1.6 h-1.6 zM1497.0 690.8 h1.6 v1.6 h-1.6 zM1498.6 690.8 h1.6 v1.6 h-1.6 zM1506.6 698.0 h1.6 v1.6 h-1.6 zM1508.2 698.0 h1.6 v1.6 h-1.6 zM1513.0 690.8 h1.6 v1.6 h-1.6 zM1517.8 683.7 h1.6 v5.2 h-1.6 zM1525.8 701.5 h1.6 v3.6 h-1.6 zM1533.8 701.5 h1.6 v1.6 h-1.6 zM1535.4 701.5 h1.6 v1.6 h-1.6 zM1541.8 690.8 h1.6 v5.2 h-1.6 zM1543.4 694.4 h1.6 v1.6 h-1.6 zM1545.0 694.4 h1.6 v1.6 h-1.6 zM1546.6 694.4 h1.6 v3.6 h-1.6 zM1548.2 690.8 h1.6 v5.2 h-1.6 zM1549.8 694.4 h1.6 v1.6 h-1.6 zM1551.4 694.4 h1.6 v1.6 h-1.6 zM1553.0 694.4 h1.6 v1.6 h-1.6 zM1554.6 694.4 h1.6 v1.6 h-1.6 zM1556.2 694.4 h1.6 v1.6 h-1.6 zM1557.8 694.4 h1.6 v1.6 h-1.6 zM1559.4 690.8 h1.6 v5.2 h-1.6 zM1562.6 690.8 h1.6 v1.6 h-1.6 zM1575.4 694.4 h1.6 v1.6 h-1.6 zM1577.0 694.4 h1.6 v3.6 h-1.6 zM1583.4 694.4 h1.6 v1.6 h-1.6 zM1589.8 694.4 h1.6 v1.6 h-1.6 zM1593.0 698.0 h1.6 v1.6 h-1.6 zM1594.6 698.0 h1.6 v1.6 h-1.6 zM1601.0 698.0 h1.6 v1.6 h-1.6 zM1604.2 701.5 h1.6 v3.6 h-1.6 zM1605.8 701.5 h1.6 v1.6 h-1.6 zM1612.2 690.8 h1.6 v1.6 h-1.6 zM1613.8 690.8 h1.6 v1.6 h-1.6 zM1615.4 690.8 h1.6 v1.6 h-1.6 zM1617.0 690.8 h1.6 v3.6 h-1.6 zM1618.6 690.8 h1.6 v1.6 h-1.6 zM1623.4 694.4 h1.6 v1.6 h-1.6 zM1625.0 694.4 h1.6 v1.6 h-1.6 zM1636.2 676.6 h1.6 v1.6 h-1.6 zM1647.4 676.6 h1.6 v1.6 h-1.6 zM1650.6 676.6 h1.6 v1.6 h-1.6 zM1684.2 665.9 h3.2 v1.6 h-3.2 zM1698.6 655.2 h1.6 v1.6 h-1.6 zM1700.2 655.2 h1.6 v1.6 h-1.6 zM1703.4 651.7 h1.6 v5.2 h-1.6 zM1705.0 655.2 h1.6 v1.6 h-1.6 zM1706.6 658.8 h1.6 v1.6 h-1.6 zM1708.2 662.4 h4.8 v1.6 h-4.8 zM1709.8 662.4 h3.2 v1.6 h-3.2 zM1713.0 665.9 h1.6 v1.6 h-1.6 zM1716.2 665.9 h3.2 v1.6 h-3.2 zM1725.8 658.8 h4.8 v1.6 h-4.8 zM1727.4 651.7 h4.8 v1.6 h-4.8 zM1729.0 651.7 h1.6 v1.6 h-1.6 zM1733.8 673.0 h4.8 v1.6 h-4.8 zM1735.4 673.0 h1.6 v1.6 h-1.6 zM1738.6 673.0 h4.8 v1.6 h-4.8 zM1740.2 673.0 h1.6 v1.6 h-1.6 zM1741.8 673.0 h1.6 v1.6 h-1.6 zM1754.6 690.8 h1.6 v7.1 h-1.6 zM1757.8 687.3 h1.6 v3.6 h-1.6 zM1761.0 676.6 h1.6 v5.2 h-1.6 zM1770.6 662.4 h3.2 v1.6 h-3.2 zM1777.0 680.2 h1.6 v1.6 h-1.6 zM1780.2 687.3 h1.6 v1.6 h-1.6 zM1785.0 690.8 h1.6 v1.6 h-1.6 zM1786.6 694.4 h1.6 v1.6 h-1.6 zM1807.4 676.6 h1.6 v1.6 h-1.6 zM1826.6 665.9 h1.6 v1.6 h-1.6 zM1839.4 665.9 h1.6 v5.2 h-1.6 zM1842.6 662.4 h1.6 v1.6 h-1.6 zM1849.0 662.4 h4.8 v1.6 h-4.8 zM1852.2 665.9 h3.2 v1.6 h-3.2 zM1853.8 673.0 h1.6 v1.6 h-1.6 zM1865.0 658.8 h1.6 v1.6 h-1.6 zM1869.8 655.2 h1.6 v1.6 h-1.6 zM1874.6 648.1 h3.2 v1.6 h-3.2 zM1876.2 648.1 h1.6 v3.6 h-1.6 zM1877.8 651.7 h3.2 v1.6 h-3.2 zM1885.8 637.4 h3.2 v1.6 h-3.2 zM1893.8 637.4 h1.6 v1.6 h-1.6 zM1901.8 648.1 h4.8 v1.6 h-4.8 zM1903.4 644.6 h1.6 v3.6 h-1.6 zM1909.8 651.7 h1.6 v1.6 h-1.6 zM1916.2 658.8 h3.2 v1.6 h-3.2 z" fill="#ffff70"/>
<path d="M130.6 470.1 h1.6 v10.7 h-1.6 zM132.2 480.8 h1.6 v3.6 h-1.6 zM148.2 487.9 h1.6 v3.6 h-1.6 zM151.4 487.9 h1.6 v10.7 h-1.6 zM157.8 484.4 h1.6 v24.9 h-1.6 zM164.2 495.0 h1.6 v3.6 h-1.6 zM165.8 498.6 h1.6 v3.6 h-1.6 zM177.0 495.0 h1.6 v3.6 h-1.6 zM178.6 498.6 h1.6 v3.6 h-1.6 zM186.6 498.6 h1.6 v7.1 h-1.6 zM189.8 502.2 h1.6 v3.6 h-1.6 zM207.4 487.9 h1.6 v7.1 h-1.6 zM215.4 480.8 h1.6 v10.7 h-1.6 zM217.0 484.4 h1.6 v21.4 h-1.6 zM220.2 502.2 h1.6 v14.2 h-1.6 zM221.8 502.2 h1.6 v10.7 h-1.6 zM223.4 502.2 h1.6 v17.8 h-1.6 zM226.6 516.4 h1.6 v7.1 h-1.6 zM228.2 523.5 h1.6 v3.6 h-1.6 zM231.4 527.1 h1.6 v17.8 h-1.6 zM245.8 512.8 h1.6 v7.1 h-1.6 zM268.2 484.4 h1.6 v7.1 h-1.6 zM271.4 495.0 h1.6 v14.2 h-1.6 zM330.6 487.9 h1.6 v10.7 h-1.6 zM332.2 495.0 h1.6 v3.6 h-1.6 zM333.8 498.6 h1.6 v14.2 h-1.6 zM337.0 505.7 h1.6 v3.6 h-1.6 zM357.8 487.9 h1.6 v3.6 h-1.6 zM378.6 470.1 h1.6 v3.6 h-1.6 zM380.2 473.7 h1.6 v3.6 h-1.6 zM394.6 438.1 h1.6 v14.2 h-1.6 zM396.2 452.3 h1.6 v3.6 h-1.6 zM397.8 455.9 h1.6 v3.6 h-1.6 zM401.0 445.2 h1.6 v14.2 h-1.6 zM402.6 459.4 h1.6 v3.6 h-1.6 zM413.8 455.9 h1.6 v7.1 h-1.6 zM415.4 463.0 h1.6 v10.7 h-1.6 zM421.8 484.4 h1.6 v10.7 h-1.6 zM423.4 480.8 h1.6 v17.8 h-1.6 zM433.0 480.8 h1.6 v3.6 h-1.6 zM434.6 484.4 h1.6 v7.1 h-1.6 zM437.8 487.9 h1.6 v10.7 h-1.6 zM441.0 477.2 h1.6 v3.6 h-1.6 zM445.8 480.8 h1.6 v3.6 h-1.6 zM450.6 484.4 h1.6 v3.6 h-1.6 zM469.8 487.9 h1.6 v7.1 h-1.6 zM471.4 495.0 h1.6 v3.6 h-1.6 zM474.6 498.6 h1.6 v7.1 h-1.6 zM484.2 495.0 h1.6 v7.1 h-1.6 zM485.8 498.6 h1.6 v3.6 h-1.6 zM487.4 502.2 h1.6 v3.6 h-1.6 zM513.0 477.2 h1.6 v17.8 h-1.6 zM514.6 495.0 h1.6 v3.6 h-1.6 zM605.8 491.5 h1.6 v3.6 h-1.6 zM658.6 473.7 h1.6 v3.6 h-1.6 zM700.2 455.9 h1.6 v3.6 h-1.6 zM703.4 459.4 h1.6 v7.1 h-1.6 zM706.6 463.0 h1.6 v3.6 h-1.6 zM708.2 466.6 h1.6 v3.6 h-1.6 zM709.8 470.1 h1.6 v3.6 h-1.6 zM721.0 477.2 h1.6 v7.1 h-1.6 zM722.6 484.4 h1.6 v7.1 h-1.6 zM724.2 491.5 h1.6 v7.1 h-1.6 zM727.4 498.6 h1.6 v7.1 h-1.6 zM745.0 466.6 h1.6 v17.8 h-1.6 zM759.4 441.6 h1.6 v7.1 h-1.6 zM826.6 441.6 h1.6 v14.2 h-1.6 zM849.0 448.8 h1.6 v21.4 h-1.6 zM921.0 448.8 h1.6 v7.1 h-1.6 zM1004.2 480.8 h1.6 v3.6 h-1.6 zM1081.0 491.5 h1.6 v14.2 h-1.6 zM1153.0 502.2 h1.6 v14.2 h-1.6 zM1154.6 512.8 h1.6 v7.1 h-1.6 zM1157.8 509.3 h1.6 v7.1 h-1.6 zM1165.8 509.3 h1.6 v14.2 h-1.6 zM1167.4 520.0 h1.6 v7.1 h-1.6 zM1170.6 527.1 h1.6 v17.8 h-1.6 zM1177.0 523.5 h1.6 v10.7 h-1.6 zM1185.0 505.7 h1.6 v28.5 h-1.6 zM1186.6 523.5 h1.6 v24.9 h-1.6 zM1188.2 537.8 h1.6 v14.2 h-1.6 zM1194.6 527.1 h1.6 v14.2 h-1.6 zM1196.2 530.6 h1.6 v17.8 h-1.6 zM1210.6 534.2 h1.6 v3.6 h-1.6 zM1215.4 537.8 h1.6 v3.6 h-1.6 zM1220.2 527.1 h1.6 v10.7 h-1.6 zM1221.8 527.1 h1.6 v7.1 h-1.6 zM1223.4 534.2 h1.6 v7.1 h-1.6 zM1226.6 537.8 h1.6 v17.8 h-1.6 zM1228.2 552.0 h1.6 v10.7 h-1.6 zM1229.8 562.7 h1.6 v3.6 h-1.6 zM1244.2 527.1 h1.6 v3.6 h-1.6 zM1245.8 530.6 h1.6 v7.1 h-1.6 zM1247.4 534.2 h1.6 v10.7 h-1.6 zM1249.0 544.9 h1.6 v7.1 h-1.6 zM1252.2 534.2 h1.6 v17.8 h-1.6 zM1253.8 541.3 h1.6 v10.7 h-1.6 zM1260.2 534.2 h1.6 v7.1 h-1.6 zM1261.8 541.3 h1.6 v10.7 h-1.6 zM1265.0 548.4 h1.6 v3.6 h-1.6 zM1285.8 512.8 h1.6 v10.7 h-1.6 zM1287.4 523.5 h1.6 v7.1 h-1.6 zM1290.6 527.1 h1.6 v10.7 h-1.6 zM1292.2 534.2 h1.6 v3.6 h-1.6 zM1298.6 512.8 h1.6 v7.1 h-1.6 zM1300.2 520.0 h1.6 v10.7 h-1.6 zM1309.8 509.3 h1.6 v3.6 h-1.6 zM1311.4 512.8 h1.6 v7.1 h-1.6 zM1316.2 520.0 h1.6 v17.8 h-1.6 zM1321.0 537.8 h1.6 v7.1 h-1.6 zM1324.2 552.0 h1.6 v3.6 h-1.6 zM1335.4 541.3 h1.6 v3.6 h-1.6 zM1337.0 534.2 h1.6 v32.0 h-1.6 zM1348.2 530.6 h1.6 v7.1 h-1.6 zM1354.6 548.4 h1.6 v3.6 h-1.6 zM1359.4 548.4 h1.6 v17.8 h-1.6 zM1362.6 566.2 h1.6 v42.7 h-1.6 zM1393.0 619.6 h1.6 v3.6 h-1.6 zM1394.6 619.6 h1.6 v67.6 h-1.6 zM1396.2 655.2 h1.6 v32.0 h-1.6 zM1399.4 673.0 h1.6 v7.1 h-1.6 zM1401.0 680.2 h1.6 v7.1 h-1.6 zM1405.8 680.2 h1.6 v3.6 h-1.6 zM1413.8 680.2 h1.6 v14.2 h-1.6 zM1415.4 687.3 h1.6 v7.1 h-1.6 zM1417.0 694.4 h1.6 v7.1 h-1.6 zM1418.6 701.5 h1.6 v7.1 h-1.6 zM1436.2 673.0 h1.6 v7.1 h-1.6 zM1437.8 680.2 h1.6 v10.7 h-1.6 zM1439.4 676.6 h1.6 v14.2 h-1.6 zM1442.6 690.8 h1.6 v3.6 h-1.6 zM1461.8 676.6 h1.6 v3.6 h-1.6 zM1465.0 680.2 h1.6 v3.6 h-1.6 zM1471.4 676.6 h1.6 v17.8 h-1.6 zM1482.6 676.6 h1.6 v7.1 h-1.6 zM1484.2 683.7 h1.6 v7.1 h-1.6 zM1487.4 690.8 h1.6 v7.1 h-1.6 zM1500.2 690.8 h1.6 v3.6 h-1.6 zM1501.8 694.4 h1.6 v3.6 h-1.6 zM1505.0 694.4 h1.6 v3.6 h-1.6 zM1521.0 683.7 h1.6 v10.7 h-1.6 zM1522.6 690.8 h1.6 v7.1 h-1.6 zM1524.2 698.0 h1.6 v3.6 h-1.6 zM1527.4 701.5 h1.6 v14.2 h-1.6 zM1564.2 680.2 h1.6 v14.2 h-1.6 zM1567.4 698.0 h1.6 v3.6 h-1.6 zM1569.0 694.4 h1.6 v10.7 h-1.6 zM1578.6 694.4 h1.6 v3.6 h-1.6 zM1588.2 690.8 h1.6 v7.1 h-1.6 zM1591.4 683.7 h1.6 v14.2 h-1.6 zM1599.4 690.8 h1.6 v7.1 h-1.6 zM1602.6 694.4 h1.6 v7.1 h-1.6 zM1621.8 690.8 h1.6 v3.6 h-1.6 zM1692.2 637.4 h1.6 v19.4 h-1.6 zM1722.6 609.0 h1.6 v39.2 h-1.6 zM1724.2 637.4 h1.6 v21.4 h-1.6 zM1730.6 651.7 h1.6 v17.8 h-1.6 zM1743.4 669.5 h1.6 v28.5 h-1.6 zM1746.6 683.7 h1.6 v10.7 h-1.6 zM1772.2 658.8 h1.6 v7.1 h-1.6 zM1794.6 676.6 h1.6 v14.2 h-1.6 zM1820.2 637.4 h1.6 v7.1 h-1.6 zM1821.8 644.6 h1.6 v14.2 h-1.6 zM1833.0 651.7 h1.6 v21.4 h-1.6 zM1834.6 665.9 h1.6 v7.1 h-1.6 zM1919.4 655.2 h1.6 v17.8 h-1.6 z" fill="#0a84ff"/>
<path d="M108.2 455.9 h1.6 v10.7 h-1.6 zM141.8 480.8 h1.6 v3.6 h-1.6 zM159.4 487.9 h1.6 v17.8 h-1.6 zM172.2 498.6 h1.6 v3.6 h-1.6 zM181.8 498.6 h1.6 v3.6 h-1.6 zM191.4 502.2 h1.6 v3.6 h-1.6 zM194.6 487.9 h1.6 v21.4 h-1.6 zM196.2 495.0 h1.6 v14.2 h-1.6 zM197.8 491.5 h1.6 v7.1 h-1.6 zM210.6 491.5 h1.6 v3.6 h-1.6 zM212.2 484.4 h1.6 v7.1 h-1.6 zM213.8 480.8 h1.6 v10.7 h-1.6 zM225.0 516.4 h1.6 v3.6 h-1.6 zM233.0 530.6 h1.6 v3.6 h-1.6 zM234.6 527.1 h1.6 v3.6 h-1.6 zM239.4 523.5 h1.6 v3.6 h-1.6 zM244.2 512.8 h1.6 v10.7 h-1.6 zM249.0 523.5 h1.6 v3.6 h-1.6 zM250.6 520.0 h1.6 v3.6 h-1.6 zM252.2 516.4 h1.6 v3.6 h-1.6 zM255.4 512.8 h1.6 v3.6 h-1.6 zM258.6 502.2 h1.6 v10.7 h-1.6 zM261.8 495.0 h1.6 v10.7 h-1.6 zM263.4 495.0 h1.6 v7.1 h-1.6 zM265.0 480.8 h1.6 v14.2 h-1.6 zM266.6 480.8 h1.6 v10.7 h-1.6 zM277.8 498.6 h1.6 v7.1 h-1.6 zM281.0 487.9 h1.6 v14.2 h-1.6 zM282.6 487.9 h1.6 v7.1 h-1.6 zM284.2 484.4 h1.6 v3.6 h-1.6 zM287.4 480.8 h1.6 v3.6 h-1.6 zM338.6 502.2 h1.6 v10.7 h-1.6 zM340.2 502.2 h1.6 v3.6 h-1.6 zM343.4 484.4 h1.6 v14.2 h-1.6 zM364.2 487.9 h1.6 v3.6 h-1.6 zM373.8 480.8 h1.6 v3.6 h-1.6 zM375.4 470.1 h1.6 v14.2 h-1.6 zM377.0 466.6 h1.6 v10.7 h-1.6 zM381.8 470.1 h1.6 v10.7 h-1.6 zM383.4 463.0 h1.6 v14.2 h-1.6 zM386.6 459.4 h1.6 v3.6 h-1.6 zM388.2 452.3 h1.6 v7.1 h-1.6 zM389.8 445.2 h1.6 v17.8 h-1.6 zM399.4 455.9 h1.6 v10.7 h-1.6 zM405.8 452.3 h1.6 v14.2 h-1.6 zM409.0 448.8 h1.6 v7.1 h-1.6 zM410.6 445.2 h1.6 v7.1 h-1.6 zM425.0 491.5 h1.6 v7.1 h-1.6 zM428.2 487.9 h1.6 v7.1 h-1.6 zM431.4 480.8 h1.6 v3.6 h-1.6 zM439.4 477.2 h1.6 v21.4 h-1.6 zM461.8 484.4 h1.6 v7.1 h-1.6 zM476.2 498.6 h1.6 v3.6 h-1.6 zM482.6 495.0 h1.6 v3.6 h-1.6 zM490.6 487.9 h1.6 v17.8 h-1.6 zM492.2 491.5 h1.6 v7.1 h-1.6 zM497.0 491.5 h1.6 v3.6 h-1.6 zM501.8 487.9 h1.6 v3.6 h-1.6 zM629.8 487.9 h1.6 v7.1 h-1.6 zM676.2 448.8 h1.6 v7.1 h-1.6 zM705.0 463.0 h1.6 v7.1 h-1.6 zM729.0 502.2 h1.6 v3.6 h-1.6 zM730.6 495.0 h1.6 v10.7 h-1.6 zM732.2 477.2 h1.6 v17.8 h-1.6 zM733.8 480.8 h1.6 v7.1 h-1.6 zM735.4 473.7 h1.6 v7.1 h-1.6 zM738.6 473.7 h1.6 v3.6 h-1.6 zM746.6 473.7 h1.6 v10.7 h-1.6 zM749.8 470.1 h1.6 v10.7 h-1.6 zM753.0 452.3 h1.6 v21.4 h-1.6 zM754.6 455.9 h1.6 v7.1 h-1.6 zM756.2 445.2 h1.6 v10.7 h-1.6 zM844.2 441.6 h1.6 v14.2 h-1.6 zM865.0 455.9 h1.6 v7.1 h-1.6 zM895.4 427.4 h1.6 v14.2 h-1.6 zM898.6 420.3 h1.6 v21.4 h-1.6 zM999.4 473.7 h1.6 v7.1 h-1.6 zM1156.2 512.8 h1.6 v3.6 h-1.6 zM1161.0 505.7 h1.6 v10.7 h-1.6 zM1172.2 527.1 h1.6 v21.4 h-1.6 zM1175.4 530.6 h1.6 v24.9 h-1.6 zM1178.6 509.3 h1.6 v24.9 h-1.6 zM1180.2 505.7 h1.6 v14.2 h-1.6 zM1189.8 541.3 h1.6 v7.1 h-1.6 zM1191.4 534.2 h1.6 v10.7 h-1.6 zM1193.0 530.6 h1.6 v3.6 h-1.6 zM1197.8 537.8 h1.6 v17.8 h-1.6 zM1199.4 541.3 h1.6 v3.6 h-1.6 zM1201.0 537.8 h1.6 v3.6 h-1.6 zM1204.2 523.5 h1.6 v7.1 h-1.6 zM1217.0 534.2 h1.6 v7.1 h-1.6 zM1218.6 520.0 h1.6 v14.2 h-1.6 zM1231.4 559.1 h1.6 v10.7 h-1.6 zM1236.2 544.9 h1.6 v10.7 h-1.6 zM1239.4 534.2 h1.6 v10.7 h-1.6 zM1241.0 520.0 h1.6 v14.2 h-1.6 zM1242.6 523.5 h1.6 v7.1 h-1.6 zM1250.6 530.6 h1.6 v24.9 h-1.6 zM1257.0 541.3 h1.6 v7.1 h-1.6 zM1258.6 534.2 h1.6 v10.7 h-1.6 zM1269.8 548.4 h1.6 v3.6 h-1.6 zM1271.4 544.9 h1.6 v10.7 h-1.6 zM1274.6 537.8 h1.6 v17.8 h-1.6 zM1276.2 534.2 h1.6 v10.7 h-1.6 zM1277.8 520.0 h1.6 v17.8 h-1.6 zM1281.0 520.0 h1.6 v3.6 h-1.6 zM1284.2 516.4 h1.6 v7.1 h-1.6 zM1293.8 523.5 h1.6 v14.2 h-1.6 zM1295.4 509.3 h1.6 v21.4 h-1.6 zM1297.0 509.3 h1.6 v14.2 h-1.6 zM1303.4 520.0 h1.6 v7.1 h-1.6 zM1305.0 509.3 h1.6 v10.7 h-1.6 zM1308.2 509.3 h1.6 v3.6 h-1.6 zM1330.6 544.9 h1.6 v17.8 h-1.6 zM1332.2 541.3 h1.6 v10.7 h-1.6 zM1340.2 544.9 h1.6 v7.1 h-1.6 zM1341.8 534.2 h1.6 v10.7 h-1.6 zM1345.0 530.6 h1.6 v3.6 h-1.6 zM1372.2 601.8 h1.6 v3.6 h-1.6 zM1404.2 680.2 h1.6 v10.7 h-1.6 zM1407.4 680.2 h1.6 v7.1 h-1.6 zM1420.2 698.0 h1.6 v10.7 h-1.6 zM1421.8 690.8 h1.6 v7.1 h-1.6 zM1425.0 687.3 h1.6 v3.6 h-1.6 zM1426.6 673.0 h1.6 v14.2 h-1.6 zM1428.2 676.6 h1.6 v7.1 h-1.6 zM1431.4 669.5 h1.6 v7.1 h-1.6 zM1444.2 690.8 h1.6 v3.6 h-1.6 zM1450.6 683.7 h1.6 v10.7 h-1.6 zM1453.8 673.0 h1.6 v10.7 h-1.6 zM1466.6 680.2 h1.6 v3.6 h-1.6 zM1503.4 694.4 h1.6 v3.6 h-1.6 zM1514.6 683.7 h1.6 v7.1 h-1.6 zM1530.6 701.5 h1.6 v10.7 h-1.6 zM1532.2 698.0 h1.6 v10.7 h-1.6 zM1570.6 701.5 h1.6 v3.6 h-1.6 zM1572.2 698.0 h1.6 v14.2 h-1.6 zM1581.8 694.4 h1.6 v3.6 h-1.6 zM1586.6 690.8 h1.6 v7.1 h-1.6 zM1596.2 694.4 h1.6 v3.6 h-1.6 zM1607.4 698.0 h1.6 v3.6 h-1.6 zM1610.6 690.8 h1.6 v7.1 h-1.6 zM1628.2 690.8 h1.6 v3.6 h-1.6 zM1631.4 683.7 h1.6 v3.6 h-1.6 zM1637.8 673.0 h1.6 v3.6 h-1.6 zM1719.4 623.2 h1.6 v42.7 h-1.6 zM1759.4 673.0 h1.6 v14.2 h-1.6 zM1841.0 665.9 h1.6 v3.6 h-1.6 zM1879.4 633.9 h1.6 v17.8 h-1.6 z" fill="#ff0000"/>
</g>
<rect x="1931.2" y="633.5" width="93.4" height="34.8" fill="#d2d2d2"/>
<g filter="url(#tb)"><text class="m" xml:space="preserve" transform="translate(1952.0 654.9) scale(0.800 1)" x="0.7 16.0 25.7 38.2 50.7" fill="#000" font-size="20" font-weight="bold">3,752</text></g>
</g>
<g>
<rect x="9.2" y="762.3" width="2015.4" height="313.7" fill="#1a1a1a"/>
<rect x="9.4" y="761.9" width="1923.4" height="291.1" fill="#fff"/>
<rect x="11.1" y="765.8" width="1919.5" height="284.8" fill="#000"/>
<rect x="9.4" y="762.1" width="1923.4" height="0.9" fill="#c4c4c4"/>
<path d="M38.3 765.8 V1050.6 M93.0 765.8 V1050.6 M129.1 765.8 V1050.6 M130.7 765.8 V1050.6 M154.0 765.8 V1050.6 M249.3 765.8 V1050.6 M346.3 765.8 V1050.6 M440.0 765.8 V1050.6 M530.5 765.8 V1050.6 M618.0 765.8 V1050.6 M713.0 765.8 V1050.6 M730.0 765.8 V1050.6 M777.0 765.8 V1050.6 M871.0 765.8 V1050.6 M966.3 765.8 V1050.6 M1056.8 765.8 V1050.6 M1153.5 765.8 V1050.6 M1248.8 765.8 V1050.6 M1344.3 765.8 V1050.6 M1441.0 765.8 V1050.6 M1536.3 765.8 V1050.6 M1627.0 765.8 V1050.6 M1717.5 765.8 V1050.6 M1812.5 765.8 V1050.6 M1885.0 765.8 V1050.6 M1925.6 765.8 V1050.6" stroke="#d8d8d8" stroke-width="1.6" stroke-dasharray="1.6 1.6" fill="none"/>
<path d="M11.1 819.4 H1930.6 M11.1 877.7 H1930.6 M11.1 936.9 H1930.6 M11.1 996.1 H1930.6" stroke="#d8d8d8" stroke-width="1.6" stroke-dasharray="1.6 1.6" fill="none"/>
<g filter="url(#tb)">
<text class="m" xml:space="preserve" transform="translate(40.0 1067.2) scale(0.760 1)" x="0.5 13.1" fill="#e4e4e4" font-size="21">04</text>
<text class="m" xml:space="preserve" transform="translate(95.0 1067.2) scale(0.760 1)" x="0.5 13.1" fill="#e4e4e4" font-size="21">06</text>
<text class="m" xml:space="preserve" transform="translate(104.6 1067.2) scale(0.760 1)" x="0.5 13.1" fill="#e4e4e4" font-size="21">07</text>
<text class="m" xml:space="preserve" transform="translate(107.4 1067.2) scale(0.760 1)" x="0.5 13.1" fill="#e4e4e4" font-size="21">08</text>
<text class="m" xml:space="preserve" transform="translate(156.0 1067.2) scale(0.760 1)" x="0.5 13.1" fill="#e4e4e4" font-size="21">09</text>
<text class="m" xml:space="preserve" transform="translate(252.0 1067.2) scale(0.760 1)" x="0.5 13.1" fill="#e4e4e4" font-size="21">10</text>
<text class="m" xml:space="preserve" transform="translate(348.8 1067.2) scale(0.760 1)" x="0.5 13.1" fill="#e4e4e4" font-size="21">11</text>
<text class="m" xml:space="preserve" transform="translate(443.0 1067.2) scale(0.760 1)" x="0.5 13.1" fill="#e4e4e4" font-size="21">12</text>
<text class="m" xml:space="preserve" transform="translate(533.5 1067.2) scale(0.760 1)" x="0.5 13.1" fill="#e4e4e4" font-size="21">13</text>
<text class="m" xml:space="preserve" transform="translate(621.0 1067.2) scale(0.760 1)" x="0.5 13.1" fill="#e4e4e4" font-size="21">14</text>
<text class="m" xml:space="preserve" transform="translate(691.0 1067.2) scale(0.760 1)" x="0.5 13.1" fill="#e4e4e4" font-size="21">15</text>
<text class="m" xml:space="preserve" transform="translate(733.5 1067.2) scale(0.760 1)" x="0.5 13.1" fill="#e4e4e4" font-size="21">16</text>
<text class="m" xml:space="preserve" transform="translate(780.5 1067.2) scale(0.760 1)" x="0.5 13.1" fill="#e4e4e4" font-size="21">17</text>
<text class="m" xml:space="preserve" transform="translate(874.0 1067.2) scale(0.760 1)" x="0.5 13.1" fill="#e4e4e4" font-size="21">18</text>
<text class="m" xml:space="preserve" transform="translate(969.5 1067.2) scale(0.760 1)" x="0.5 13.1" fill="#e4e4e4" font-size="21">19</text>
<text class="m" xml:space="preserve" transform="translate(1059.5 1067.2) scale(0.760 1)" x="0.5 13.1" fill="#e4e4e4" font-size="21">20</text>
<text class="m" xml:space="preserve" transform="translate(1156.0 1067.2) scale(0.760 1)" x="0.5 13.1" fill="#e4e4e4" font-size="21">21</text>
<text class="m" xml:space="preserve" transform="translate(1251.5 1067.2) scale(0.760 1)" x="0.5 13.1" fill="#e4e4e4" font-size="21">22</text>
<text class="m" xml:space="preserve" transform="translate(1347.0 1067.2) scale(0.760 1)" x="0.5 13.1" fill="#e4e4e4" font-size="21">23</text>
<text class="m" xml:space="preserve" transform="translate(1443.5 1067.2) scale(0.760 1)" x="0.5 13.1" fill="#e4e4e4" font-size="21">00</text>
<text class="m" xml:space="preserve" transform="translate(1539.0 1067.2) scale(0.760 1)" x="0.5 13.1" fill="#e4e4e4" font-size="21">01</text>
<text class="m" xml:space="preserve" transform="translate(1629.5 1067.2) scale(0.760 1)" x="0.5 13.1" fill="#e4e4e4" font-size="21">02</text>
<text class="m" xml:space="preserve" transform="translate(1720.0 1067.2) scale(0.760 1)" x="0.5 13.1" fill="#e4e4e4" font-size="21">03</text>
<text class="m" xml:space="preserve" transform="translate(1815.0 1067.2) scale(0.760 1)" x="0.5 13.1" fill="#e4e4e4" font-size="21">04</text>
<text class="m" xml:space="preserve" transform="translate(1887.0 1067.2) scale(0.760 1)" x="0.5 13.1" fill="#e4e4e4" font-size="21">05</text>
<text class="m" xml:space="preserve" transform="translate(1903.6 1067.2) scale(0.760 1)" x="0.5 13.1" fill="#e4e4e4" font-size="21">06</text>
<text class="m" xml:space="preserve" transform="translate(1443.5 1042.6) scale(0.760 1)" x="0.5 13.1" fill="#e4e4e4" font-size="21">07</text>
<clipPath id="c2"><rect x="1930" y="762.3" width="100" height="313.7"/></clipPath>
<g clip-path="url(#c2)">
<text class="m" xml:space="preserve" transform="translate(1933.6 816.0) scale(0.760 1)" x="0.5 16.0 25.7 38.4 51.0" fill="#e4e4e4" font-size="21">3,900</text>
<text class="m" xml:space="preserve" transform="translate(1933.6 874.3) scale(0.760 1)" x="0.5 16.0 25.7 38.4 51.0" fill="#e4e4e4" font-size="21">3,875</text>
<text class="m" xml:space="preserve" transform="translate(1933.6 933.5) scale(0.760 1)" x="0.5 16.0 25.7 38.4 51.0" fill="#e4e4e4" font-size="21">3,850</text>
<text class="m" xml:space="preserve" transform="translate(1933.6 992.7) scale(0.760 1)" x="0.5 16.0 25.7 38.4 51.0" fill="#e4e4e4" font-size="21">3,825</text>
<text class="m" xml:space="preserve" transform="translate(1933.6 1051.8) scale(0.760 1)" x="0.5 16.0 25.7 38.4 51.0" fill="#e4e4e4" font-size="21">3,800</text>
</g>
<text class="m" xml:space="preserve" transform="translate(14.2 785.0) scale(0.760 1)" x="1.4" fill="#e4e4e4" font-size="21">[</text><text class="j" x="23.2" y="786.0" fill="#e4e4e4" font-size="20.4">金</text><text class="m" xml:space="preserve" transform="translate(43.0 785.0) scale(0.760 1)" x="3.4 13.1 25.7 41.3 51.0 63.6 79.2 88.9 104.4 114.2 126.8 139.4" fill="#e4e4e4" font-size="21"> 23/02 7,649</text><text class="m" x="159.0" y="787.2" fill="#e4e4e4" font-size="30">×</text><text class="m" xml:space="preserve" transform="translate(177.4 785.0) scale(0.760 1)" x="0.5 16.0 25.7 38.4 53.9" fill="#e4e4e4" font-size="21">1.00]</text><text class="j" x="224.8" y="786.0" fill="#e4e4e4" font-size="20.4">－</text><text class="m" xml:space="preserve" transform="translate(244.6 785.0) scale(0.760 1)" x="1.4" fill="#e4e4e4" font-size="21">[</text><text class="j" x="253.6 272.8" y="786.0" fill="#e4e4e4" font-size="20.4">白金</text><text class="m" xml:space="preserve" transform="translate(292.6 785.0) scale(0.760 1)" x="3.4 13.1 25.7 41.3 51.0 63.6 79.2 88.9 104.4 114.2 126.8 139.4" fill="#e4e4e4" font-size="21"> 23/02 3,752</text><text class="m" x="408.6" y="787.2" fill="#e4e4e4" font-size="30">×</text><text class="m" xml:space="preserve" transform="translate(427.0 785.0) scale(0.760 1)" x="0.5 16.0 25.7 38.4 53.9 66.6" fill="#e4e4e4" font-size="21">1.00] </text><text class="j" x="484.0 503.2" y="786.0" fill="#e4e4e4" font-size="20.4">終値</text><text class="m" xml:space="preserve" transform="translate(523.0 785.0) scale(0.760 1)" x="3.4" fill="#e4e4e4" font-size="21"> </text><text class="j" x="532.0 551.2" y="786.0" fill="#e4e4e4" font-size="20.4">時刻</text><text class="m" xml:space="preserve" transform="translate(571.0 785.0) scale(0.760 1)" x="3.4 13.1 25.7 41.3 51.0 63.6 79.2 88.9 104.4 114.2 126.8 139.4" fill="#e4e4e4" font-size="21">:06:00 3,897</text>
</g>
<path d="M13.0 1017.4 L14.6 1017.4 L16.2 1015.0 L17.8 1010.3 L19.4 1010.3 L21.0 1007.9 L22.6 1007.9 L24.2 1010.3 L25.8 1015.0 L27.4 1017.4 L29.0 1012.7 L30.6 1010.3 L32.2 1012.7 L33.8 1015.0 L35.4 1015.0 L37.0 1012.7 L38.6 1010.3 L40.2 1007.9 L41.8 1005.6 L43.4 1000.8 L45.0 1000.8 L46.6 1003.2 L48.2 1003.2 L49.8 1000.8 L51.4 1000.8 L53.0 1003.2 L54.6 1005.6 L56.2 1003.2 L57.8 1000.8 L59.4 996.1 L61.0 993.7 L62.6 996.1 L64.2 996.1 L65.8 996.1 L67.4 993.7 L69.0 993.7 L70.6 991.4 L72.2 989.0 L73.8 986.6 L75.4 986.6 L77.0 993.7 L78.6 996.1 L80.2 1000.8 L81.8 1000.8 L83.4 996.1 L85.0 996.1 L86.6 996.1 L88.2 998.5 L89.8 1003.2 L91.4 1010.3 L93.0 1019.8 L94.6 1019.8 L96.2 1015.0 L97.8 1017.4 L99.4 1015.0 L101.0 1012.7 L102.6 1015.0 L104.2 1012.7 L105.8 1007.9 L107.4 1005.6 L109.0 1005.6 L110.6 1012.7 L112.2 1012.7 L113.8 1010.3 L115.4 1012.7 L117.0 1017.4 L118.6 1017.4 L120.2 1017.4 L121.8 1015.0 L123.4 1017.4 L125.0 1015.0 L126.6 1010.3 L128.2 1003.2 L129.8 1007.9 L131.4 1026.9 L133.0 1012.7 L134.6 1007.9 L136.2 1003.2 L137.8 1005.6 L139.4 1003.2 L141.0 1005.6 L142.6 1005.6 L144.2 1000.8 L145.8 1003.2 L147.4 1000.8 L149.0 1000.8 L150.6 996.1 L152.2 996.1 L153.8 996.1 L155.4 996.1 L157.0 996.1 L158.6 998.5 L160.2 1000.8 L161.8 1005.6 L163.4 1010.3 L165.0 1010.3 L166.6 1010.3 L168.2 1007.9 L169.8 1005.6 L171.4 998.5 L173.0 996.1 L174.6 991.4 L176.2 989.0 L177.8 984.3 L179.4 981.9 L181.0 981.9 L182.6 981.9 L184.2 981.9 L185.8 981.9 L187.4 984.3 L189.0 989.0 L190.6 984.3 L192.2 981.9 L193.8 981.9 L195.4 986.6 L197.0 986.6 L198.6 986.6 L200.2 989.0 L201.8 989.0 L203.4 991.4 L205.0 993.7 L206.6 989.0 L208.2 986.6 L209.8 984.3 L211.4 981.9 L213.0 979.5 L214.6 979.5 L216.2 981.9 L217.8 979.5 L219.4 974.8 L221.0 974.8 L222.6 974.8 L224.2 977.2 L225.8 974.8 L227.4 970.1 L229.0 965.3 L230.6 960.6 L232.2 955.8 L233.8 958.2 L235.4 960.6 L237.0 962.9 L238.6 962.9 L240.2 962.9 L241.8 965.3 L243.4 967.7 L245.0 967.7 L246.6 970.1 L248.2 967.7 L249.8 965.3 L251.4 962.9 L253.0 962.9 L254.6 967.7 L256.2 967.7 L257.8 972.4 L259.4 977.2 L261.0 974.8 L262.6 977.2 L264.2 972.4 L265.8 965.3 L267.4 958.2 L269.0 953.5 L270.6 953.5 L272.2 951.1 L273.8 946.4 L275.4 946.4 L277.0 946.4 L278.6 948.7 L280.2 948.7 L281.8 946.4 L283.4 944.0 L285.0 944.0 L286.6 944.0 L288.2 941.6 L289.8 936.9 L291.4 934.5 L293.0 936.9 L294.6 934.5 L296.2 932.2 L297.8 934.5 L299.4 929.8 L301.0 929.8 L302.6 925.1 L304.2 927.4 L305.8 927.4 L307.4 929.8 L309.0 929.8 L310.6 934.5 L312.2 934.5 L313.8 929.8 L315.4 929.8 L317.0 932.2 L318.6 932.2 L320.2 934.5 L321.8 932.2 L323.4 927.4 L325.0 925.1 L326.6 932.2 L328.2 936.9 L329.8 939.3 L331.4 946.4 L333.0 944.0 L334.6 944.0 L336.2 944.0 L337.8 944.0 L339.4 941.6 L341.0 934.5 L342.6 934.5 L344.2 941.6 L345.8 944.0 L347.4 946.4 L349.0 944.0 L350.6 944.0 L352.2 941.6 L353.8 941.6 L355.4 941.6 L357.0 944.0 L358.6 946.4 L360.2 946.4 L361.8 946.4 L363.4 946.4 L365.0 941.6 L366.6 939.3 L368.2 934.5 L369.8 932.2 L371.4 932.2 L373.0 929.8 L374.6 929.8 L376.2 927.4 L377.8 929.8 L379.4 929.8 L381.0 932.2 L382.6 932.2 L384.2 934.5 L385.8 936.9 L387.4 941.6 L389.0 944.0 L390.6 951.1 L392.2 953.5 L393.8 955.8 L395.4 953.5 L397.0 946.4 L398.6 944.0 L400.2 944.0 L401.8 941.6 L403.4 939.3 L405.0 939.3 L406.6 939.3 L408.2 939.3 L409.8 941.6 L411.4 944.0 L413.0 948.7 L414.6 955.8 L416.2 955.8 L417.8 951.1 L419.4 946.4 L421.0 946.4 L422.6 946.4 L424.2 944.0 L425.8 944.0 L427.4 948.7 L429.0 951.1 L430.6 951.1 L432.2 953.5 L433.8 953.5 L435.4 953.5 L437.0 951.1 L438.6 951.1 L440.2 951.1 L441.8 953.5 L443.4 951.1 L445.0 955.8 L446.6 955.8 L448.2 955.8 L449.8 955.8 L451.4 955.8 L453.0 955.8 L454.6 953.5 L456.2 955.8 L457.8 955.8 L459.4 958.2 L461.0 958.2 L462.6 958.2 L464.2 955.8 L465.8 951.1 L467.4 951.1 L469.0 951.1 L470.6 948.7 L472.2 951.1 L473.8 951.1 L475.4 951.1 L477.0 951.1 L478.6 951.1 L480.2 951.1 L481.8 948.7 L483.4 948.7 L485.0 946.4 L486.6 946.4 L488.2 944.0 L489.8 944.0 L491.4 944.0 L493.0 944.0 L494.6 946.4 L496.2 946.4 L497.8 946.4 L499.4 946.4 L501.0 944.0 L502.6 946.4 L504.2 946.4 L505.8 948.7 L507.4 946.4 L509.0 948.7 L510.6 948.7 L512.2 948.7 L513.8 951.1 L515.4 951.1 L517.0 946.4 L518.6 946.4 L520.2 946.4 L521.8 948.7 L523.4 951.1 L525.0 951.1 L526.6 951.1 L528.2 946.4 L529.8 948.7 L531.4 948.7 L533.0 948.7 L534.6 951.1 L536.2 953.5 L537.8 953.5 L539.4 953.5 L541.0 955.8 L542.6 955.8 L544.2 955.8 L545.8 955.8 L547.4 955.8 L549.0 953.5 L550.6 953.5 L552.2 953.5 L553.8 955.8 L555.4 953.5 L557.0 955.8 L558.6 955.8 L560.2 953.5 L561.8 953.5 L563.4 953.5 L565.0 951.1 L566.6 953.5 L568.2 953.5 L569.8 958.2 L571.4 958.2 L573.0 960.6 L574.6 962.9 L576.2 962.9 L577.8 965.3 L579.4 962.9 L581.0 960.6 L582.6 960.6 L584.2 958.2 L585.8 958.2 L587.4 958.2 L589.0 955.8 L590.6 953.5 L592.2 955.8 L593.8 955.8 L595.4 955.8 L597.0 955.8 L598.6 958.2 L600.2 958.2 L601.8 960.6 L603.4 962.9 L605.0 965.3 L606.6 965.3 L608.2 965.3 L609.8 960.6 L611.4 958.2 L613.0 948.7 L614.6 944.0 L616.2 946.4 L617.8 948.7 L619.4 951.1 L621.0 951.1 L622.6 953.5 L624.2 953.5 L625.8 953.5 L627.4 958.2 L629.0 958.2 L630.6 960.6 L632.2 960.6 L633.8 965.3 L635.4 967.7 L637.0 970.1 L638.6 967.7 L640.2 970.1 L641.8 970.1 L643.4 967.7 L645.0 967.7 L646.6 965.3 L648.2 967.7 L649.8 967.7 L651.4 967.7 L653.0 970.1 L654.6 967.7 L656.2 965.3 L657.8 965.3 L659.4 962.9 L661.0 960.6 L662.6 958.2 L664.2 960.6 L665.8 960.6 L667.4 958.2 L669.0 958.2 L670.6 958.2 L672.2 958.2 L673.8 962.9 L675.4 965.3 L677.0 965.3 L678.6 962.9 L680.2 962.9 L681.8 960.6 L683.4 958.2 L685.0 960.6 L686.6 955.8 L688.2 955.8 L689.8 955.8 L691.4 955.8 L693.0 955.8 L694.6 958.2 L696.2 955.8 L697.8 958.2 L699.4 958.2 L701.0 962.9 L702.6 965.3 L704.2 962.9 L705.8 958.2 L707.4 960.6 L709.0 960.6 L710.6 962.9 L712.2 962.9 L713.8 962.9 L715.4 962.9 L717.0 967.7 L718.6 965.3 L720.2 965.3 L721.8 962.9 L723.4 960.6 L725.0 960.6 L726.6 958.2 L728.2 953.5 L729.8 953.5 L731.4 958.2 L733.0 979.5 L734.6 984.3 L736.2 989.0 L737.8 986.6 L739.4 984.3 L741.0 977.2 L742.6 979.5 L744.2 979.5 L745.8 979.5 L747.4 981.9 L749.0 984.3 L750.6 979.5 L752.2 979.5 L753.8 981.9 L755.4 981.9 L757.0 974.8 L758.6 977.2 L760.2 979.5 L761.8 981.9 L763.4 977.2 L765.0 981.9 L766.6 984.3 L768.2 981.9 L769.8 981.9 L771.4 979.5 L773.0 979.5 L774.6 979.5 L776.2 974.8 L777.8 972.4 L779.4 974.8 L781.0 972.4 L782.6 972.4 L784.2 970.1 L785.8 967.7 L787.4 972.4 L789.0 972.4 L790.6 972.4 L792.2 974.8 L793.8 977.2 L795.4 977.2 L797.0 974.8 L798.6 974.8 L800.2 974.8 L801.8 974.8 L803.4 970.1 L805.0 970.1 L806.6 970.1 L808.2 970.1 L809.8 974.8 L811.4 970.1 L813.0 967.7 L814.6 960.6 L816.2 955.8 L817.8 955.8 L819.4 951.1 L821.0 953.5 L822.6 958.2 L824.2 958.2 L825.8 962.9 L827.4 960.6 L829.0 965.3 L830.6 962.9 L832.2 967.7 L833.8 967.7 L835.4 967.7 L837.0 965.3 L838.6 965.3 L840.2 962.9 L841.8 965.3 L843.4 962.9 L845.0 965.3 L846.6 965.3 L848.2 967.7 L849.8 955.8 L851.4 944.0 L853.0 944.0 L854.6 941.6 L856.2 944.0 L857.8 946.4 L859.4 946.4 L861.0 946.4 L862.6 946.4 L864.2 946.4 L865.8 948.7 L867.4 946.4 L869.0 946.4 L870.6 946.4 L872.2 946.4 L873.8 944.0 L875.4 944.0 L877.0 936.9 L878.6 929.8 L880.2 925.1 L881.8 922.7 L883.4 920.3 L885.0 920.3 L886.6 920.3 L888.2 920.3 L889.8 918.0 L891.4 913.2 L893.0 915.6 L894.6 920.3 L896.2 925.1 L897.8 922.7 L899.4 915.6 L901.0 915.6 L902.6 918.0 L904.2 920.3 L905.8 920.3 L907.4 920.3 L909.0 918.0 L910.6 915.6 L912.2 918.0 L913.8 915.6 L915.4 918.0 L917.0 915.6 L918.6 922.7 L920.2 922.7 L921.8 918.0 L923.4 918.0 L925.0 918.0 L926.6 922.7 L928.2 922.7 L929.8 922.7 L931.4 925.1 L933.0 927.4 L934.6 927.4 L936.2 922.7 L937.8 925.1 L939.4 922.7 L941.0 925.1 L942.6 925.1 L944.2 929.8 L945.8 929.8 L947.4 922.7 L949.0 915.6 L950.6 915.6 L952.2 910.9 L953.8 913.2 L955.4 913.2 L957.0 915.6 L958.6 918.0 L960.2 915.6 L961.8 915.6 L963.4 915.6 L965.0 918.0 L966.6 915.6 L968.2 915.6 L969.8 910.9 L971.4 906.1 L973.0 903.7 L974.6 903.7 L976.2 901.4 L977.8 901.4 L979.4 899.0 L981.0 901.4 L982.6 901.4 L984.2 901.4 L985.8 899.0 L987.4 896.6 L989.0 894.3 L990.6 889.5 L992.2 889.5 L993.8 891.9 L995.4 889.5 L997.0 887.2 L998.6 889.5 L1000.2 891.9 L1001.8 889.5 L1003.4 891.9 L1005.0 889.5 L1006.6 889.5 L1008.2 887.2 L1009.8 889.5 L1011.4 891.9 L1013.0 894.3 L1014.6 896.6 L1016.2 894.3 L1017.8 896.6 L1019.4 901.4 L1021.0 908.5 L1022.6 903.7 L1024.2 899.0 L1025.8 896.6 L1027.4 899.0 L1029.0 901.4 L1030.6 903.7 L1032.2 901.4 L1033.8 903.7 L1035.4 903.7 L1037.0 906.1 L1038.6 910.9 L1040.2 913.2 L1041.8 913.2 L1043.4 910.9 L1045.0 910.9 L1046.6 908.5 L1048.2 908.5 L1049.8 908.5 L1051.4 910.9 L1053.0 913.2 L1054.6 918.0 L1056.2 925.1 L1057.8 925.1 L1059.4 925.1 L1061.0 922.7 L1062.6 920.3 L1064.2 920.3 L1065.8 920.3 L1067.4 922.7 L1069.0 922.7 L1070.6 922.7 L1072.2 925.1 L1073.8 925.1 L1075.4 927.4 L1077.0 939.3 L1078.6 946.4 L1080.2 951.1 L1081.8 951.1 L1083.4 951.1 L1085.0 951.1 L1086.6 955.8 L1088.2 958.2 L1089.8 958.2 L1091.4 955.8 L1093.0 955.8 L1094.6 958.2 L1096.2 955.8 L1097.8 962.9 L1099.4 960.6 L1101.0 955.8 L1102.6 955.8 L1104.2 955.8 L1105.8 955.8 L1107.4 955.8 L1109.0 958.2 L1110.6 955.8 L1112.2 958.2 L1113.8 955.8 L1115.4 951.1 L1117.0 948.7 L1118.6 951.1 L1120.2 951.1 L1121.8 953.5 L1123.4 953.5 L1125.0 953.5 L1126.6 953.5 L1128.2 948.7 L1129.8 944.0 L1131.4 944.0 L1133.0 946.4 L1134.6 946.4 L1136.2 951.1 L1137.8 948.7 L1139.4 948.7 L1141.0 948.7 L1142.6 948.7 L1144.2 953.5 L1145.8 955.8 L1147.4 955.8 L1149.0 953.5 L1150.6 951.1 L1152.2 951.1 L1153.8 948.7 L1155.4 946.4 L1157.0 944.0 L1158.6 955.8 L1160.2 955.8 L1161.8 955.8 L1163.4 955.8 L1165.0 948.7 L1166.6 946.4 L1168.2 944.0 L1169.8 939.3 L1171.4 939.3 L1173.0 944.0 L1174.6 948.7 L1176.2 944.0 L1177.8 936.9 L1179.4 936.9 L1181.0 941.6 L1182.6 944.0 L1184.2 941.6 L1185.8 922.7 L1187.4 908.5 L1189.0 903.7 L1190.6 899.0 L1192.2 901.4 L1193.8 901.4 L1195.4 910.9 L1197.0 901.4 L1198.6 896.6 L1200.2 896.6 L1201.8 896.6 L1203.4 901.4 L1205.0 903.7 L1206.6 908.5 L1208.2 903.7 L1209.8 899.0 L1211.4 896.6 L1213.0 899.0 L1214.6 899.0 L1216.2 899.0 L1217.8 903.7 L1219.4 908.5 L1221.0 906.1 L1222.6 899.0 L1224.2 896.6 L1225.8 891.9 L1227.4 887.2 L1229.0 889.5 L1230.6 889.5 L1232.2 891.9 L1233.8 894.3 L1235.4 896.6 L1237.0 901.4 L1238.6 896.6 L1240.2 899.0 L1241.8 903.7 L1243.4 908.5 L1245.0 903.7 L1246.6 899.0 L1248.2 891.9 L1249.8 880.1 L1251.4 884.8 L1253.0 887.2 L1254.6 882.4 L1256.2 877.7 L1257.8 877.7 L1259.4 873.0 L1261.0 877.7 L1262.6 877.7 L1264.2 880.1 L1265.8 877.7 L1267.4 877.7 L1269.0 880.1 L1270.6 884.8 L1272.2 891.9 L1273.8 896.6 L1275.4 894.3 L1277.0 896.6 L1278.6 896.6 L1280.2 894.3 L1281.8 896.6 L1283.4 894.3 L1285.0 889.5 L1286.6 891.9 L1288.2 896.6 L1289.8 896.6 L1291.4 889.5 L1293.0 887.2 L1294.6 887.2 L1296.2 887.2 L1297.8 884.8 L1299.4 887.2 L1301.0 889.5 L1302.6 870.6 L1304.2 865.9 L1305.8 863.5 L1307.4 868.2 L1309.0 875.3 L1310.6 875.3 L1312.2 868.2 L1313.8 868.2 L1315.4 865.9 L1317.0 865.9 L1318.6 858.8 L1320.2 858.8 L1321.8 856.4 L1323.4 858.8 L1325.0 858.8 L1326.6 863.5 L1328.2 863.5 L1329.8 863.5 L1331.4 856.4 L1333.0 846.9 L1334.6 846.9 L1336.2 851.7 L1337.8 851.7 L1339.4 844.5 L1341.0 837.4 L1342.6 839.8 L1344.2 839.8 L1345.8 839.8 L1347.4 842.2 L1349.0 839.8 L1350.6 842.2 L1352.2 839.8 L1353.8 844.5 L1355.4 842.2 L1357.0 844.5 L1358.6 849.3 L1360.2 849.3 L1361.8 854.0 L1363.4 851.7 L1365.0 837.4 L1366.6 835.1 L1368.2 832.7 L1369.8 828.0 L1371.4 825.6 L1373.0 820.9 L1374.6 820.9 L1376.2 825.6 L1377.8 825.6 L1379.4 818.5 L1381.0 818.5 L1382.6 823.2 L1384.2 828.0 L1385.8 828.0 L1387.4 828.0 L1389.0 830.3 L1390.6 837.4 L1392.2 835.1 L1393.8 825.6 L1395.4 813.8 L1397.0 801.9 L1398.6 794.8 L1400.2 794.8 L1401.8 804.3 L1403.4 804.3 L1405.0 801.9 L1406.6 804.3 L1408.2 804.3 L1409.8 806.7 L1411.4 806.7 L1413.0 801.9 L1414.6 804.3 L1416.2 806.7 L1417.8 806.7 L1419.4 806.7 L1421.0 806.7 L1422.6 806.7 L1424.2 806.7 L1425.8 809.0 L1427.4 806.7 L1429.0 809.0 L1430.6 806.7 L1432.2 809.0 L1433.8 809.0 L1435.4 809.0 L1437.0 809.0 L1438.6 806.7 L1440.2 806.7 L1441.8 804.3 L1443.4 801.9 L1445.0 799.6 L1446.6 799.6 L1448.2 794.8 L1449.8 792.5 L1451.4 787.7 L1453.0 790.1 L1454.6 792.5 L1456.2 794.8 L1457.8 787.7 L1459.4 787.7 L1461.0 780.6 L1462.6 783.0 L1464.2 787.7 L1465.8 790.1 L1467.4 787.7 L1469.0 787.7 L1470.6 790.1 L1472.2 787.7 L1473.8 780.6 L1475.4 785.3 L1477.0 785.3 L1478.6 792.5 L1480.2 792.5 L1481.8 794.8 L1483.4 790.1 L1485.0 787.7 L1486.6 783.0 L1488.2 787.7 L1489.8 787.7 L1491.4 787.7 L1493.0 790.1 L1494.6 792.5 L1496.2 794.8 L1497.8 794.8 L1499.4 792.5 L1501.0 792.5 L1502.6 790.1 L1504.2 787.7 L1505.8 783.0 L1507.4 785.3 L1509.0 787.7 L1510.6 790.1 L1512.2 794.8 L1513.8 797.2 L1515.4 799.6 L1517.0 797.2 L1518.6 794.8 L1520.2 790.1 L1521.8 787.7 L1523.4 785.3 L1525.0 787.7 L1526.6 790.1 L1528.2 790.1 L1529.8 787.7 L1531.4 787.7 L1533.0 785.3 L1534.6 787.7 L1536.2 787.7 L1537.8 790.1 L1539.4 792.5 L1541.0 792.5 L1542.6 794.8 L1544.2 792.5 L1545.8 792.5 L1547.4 787.7 L1549.0 794.8 L1550.6 799.6 L1552.2 804.3 L1553.8 804.3 L1555.4 804.3 L1557.0 801.9 L1558.6 801.9 L1560.2 801.9 L1561.8 804.3 L1563.4 809.0 L1565.0 811.4 L1566.6 811.4 L1568.2 813.8 L1569.8 813.8 L1571.4 811.4 L1573.0 813.8 L1574.6 813.8 L1576.2 813.8 L1577.8 813.8 L1579.4 811.4 L1581.0 809.0 L1582.6 806.7 L1584.2 809.0 L1585.8 804.3 L1587.4 809.0 L1589.0 809.0 L1590.6 806.7 L1592.2 806.7 L1593.8 801.9 L1595.4 806.7 L1597.0 806.7 L1598.6 809.0 L1600.2 809.0 L1601.8 809.0 L1603.4 809.0 L1605.0 809.0 L1606.6 809.0 L1608.2 811.4 L1609.8 813.8 L1611.4 816.1 L1613.0 818.5 L1614.6 818.5 L1616.2 816.1 L1617.8 813.8 L1619.4 813.8 L1621.0 813.8 L1622.6 816.1 L1624.2 816.1 L1625.8 813.8 L1627.4 813.8 L1629.0 820.9 L1630.6 828.0 L1632.2 830.3 L1633.8 835.1 L1635.4 839.8 L1637.0 837.4 L1638.6 839.8 L1640.2 842.2 L1641.8 849.3 L1643.4 854.0 L1645.0 854.0 L1646.6 851.7 L1648.2 851.7 L1649.8 851.7 L1651.4 854.0 L1653.0 854.0 L1654.6 858.8 L1656.2 856.4 L1657.8 856.4 L1659.4 856.4 L1661.0 854.0 L1662.6 849.3 L1664.2 854.0 L1665.8 854.0 L1667.4 856.4 L1669.0 858.8 L1670.6 861.1 L1672.2 861.1 L1673.8 865.9 L1675.4 861.1 L1677.0 861.1 L1678.6 858.8 L1680.2 861.1 L1681.8 856.4 L1683.4 858.8 L1685.0 858.8 L1686.6 861.1 L1688.2 861.1 L1689.8 858.8 L1691.4 861.1 L1693.0 861.1 L1694.6 865.9 L1696.2 868.2 L1697.8 870.6 L1699.4 868.2 L1701.0 873.0 L1702.6 877.7 L1704.2 875.3 L1705.8 875.3 L1707.4 875.3 L1709.0 873.0 L1710.6 868.2 L1712.2 868.2 L1713.8 863.5 L1715.4 863.5 L1717.0 856.4 L1718.6 854.0 L1720.2 854.0 L1721.8 851.7 L1723.4 856.4 L1725.0 856.4 L1726.6 858.8 L1728.2 858.8 L1729.8 858.8 L1731.4 863.5 L1733.0 873.0 L1734.6 877.7 L1736.2 880.1 L1737.8 873.0 L1739.4 873.0 L1741.0 873.0 L1742.6 870.6 L1744.2 870.6 L1745.8 865.9 L1747.4 858.8 L1749.0 856.4 L1750.6 854.0 L1752.2 858.8 L1753.8 861.1 L1755.4 856.4 L1757.0 854.0 L1758.6 844.5 L1760.2 846.9 L1761.8 849.3 L1763.4 851.7 L1765.0 856.4 L1766.6 856.4 L1768.2 854.0 L1769.8 846.9 L1771.4 842.2 L1773.0 837.4 L1774.6 830.3 L1776.2 835.1 L1777.8 839.8 L1779.4 846.9 L1781.0 856.4 L1782.6 849.3 L1784.2 846.9 L1785.8 849.3 L1787.4 849.3 L1789.0 844.5 L1790.6 832.7 L1792.2 837.4 L1793.8 844.5 L1795.4 849.3 L1797.0 851.7 L1798.6 849.3 L1800.2 835.1 L1801.8 830.3 L1803.4 832.7 L1805.0 830.3 L1806.6 820.9 L1808.2 820.9 L1809.8 823.2 L1811.4 825.6 L1813.0 832.7 L1814.6 832.7 L1816.2 828.0 L1817.8 828.0 L1819.4 832.7 L1821.0 844.5 L1822.6 849.3 L1824.2 851.7 L1825.8 839.8 L1827.4 830.3 L1829.0 830.3 L1830.6 832.7 L1832.2 830.3 L1833.8 832.7 L1835.4 832.7 L1837.0 832.7 L1838.6 835.1 L1840.2 835.1 L1841.8 832.7 L1843.4 830.3 L1845.0 825.6 L1846.6 825.6 L1848.2 823.2 L1849.8 823.2 L1851.4 823.2 L1853.0 823.2 L1854.6 823.2 L1856.2 823.2 L1857.8 825.6 L1859.4 825.6 L1861.0 828.0 L1862.6 830.3 L1864.2 837.4 L1865.8 837.4 L1867.4 837.4 L1869.0 837.4 L1870.6 837.4 L1872.2 839.8 L1873.8 837.4 L1875.4 837.4 L1877.0 842.2 L1878.6 839.8 L1880.2 839.8 L1881.8 837.4 L1883.4 844.5 L1885.0 846.9 L1886.6 844.5 L1888.2 842.2 L1889.8 835.1 L1891.4 837.4 L1893.0 839.8 L1894.6 837.4 L1896.2 837.4 L1897.8 839.8 L1899.4 839.8 L1901.0 842.2 L1902.6 844.5 L1904.2 846.9 L1905.8 844.5 L1907.4 839.8 L1909.0 835.1 L1910.6 832.7 L1912.2 830.3 L1913.8 832.7 L1915.4 830.3 L1917.0 828.0 L1918.6 830.3 L1920.2 832.7 L1921.8 835.1 L1923.4 835.1 L1925.0 835.1 L1926.6 830.3 L1928.2 825.6" stroke="#ff0000" stroke-width="3.3" fill="none" stroke-linejoin="miter" filter="url(#bl)"/>
<rect x="1931.2" y="808.5" width="93.4" height="34.5" fill="#d2d2d2"/>
<g filter="url(#tb)"><text class="m" xml:space="preserve" transform="translate(1952.0 829.9) scale(0.800 1)" x="0.7 16.0 25.7 38.2 50.7" fill="#000" font-size="20" font-weight="bold">3,897</text></g>
</g>
</svg>
</body></html>
